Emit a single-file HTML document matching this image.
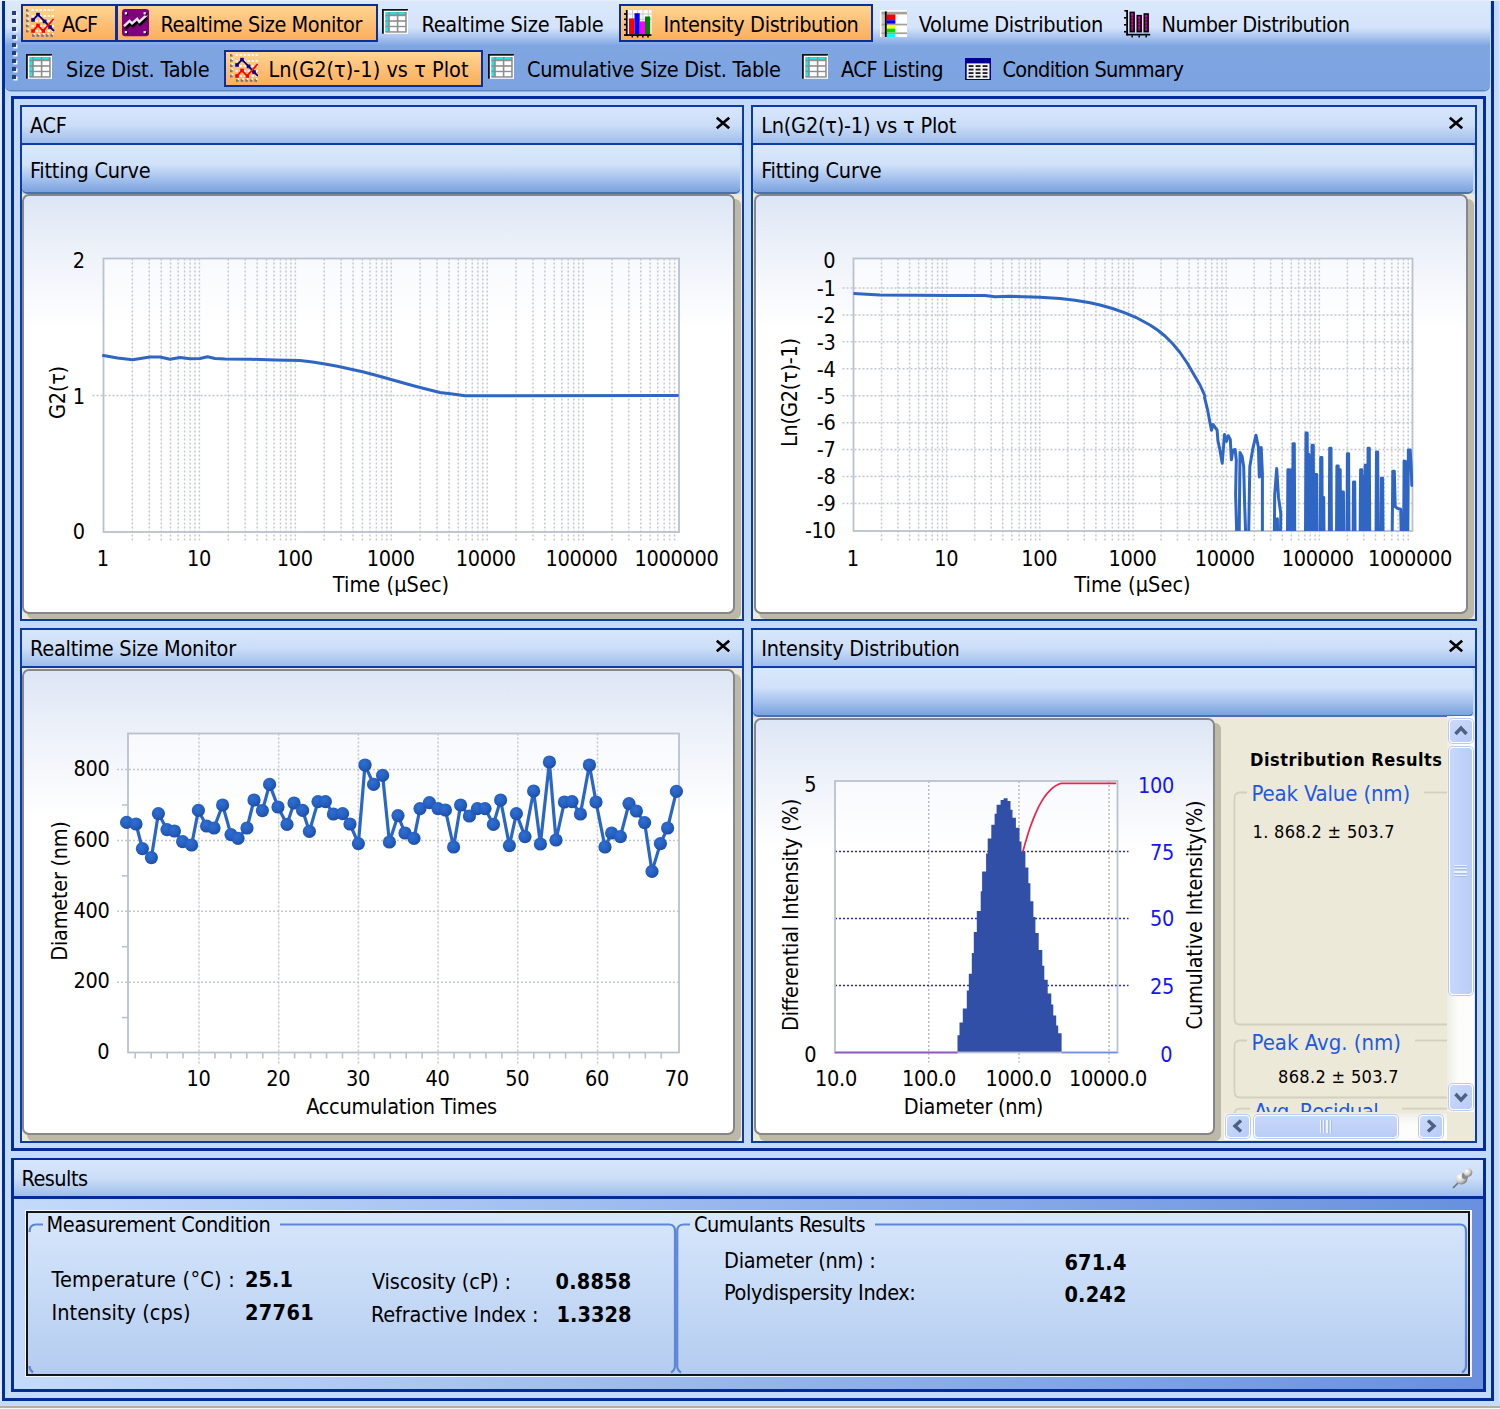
<!DOCTYPE html><html><head><meta charset="utf-8"><title>DLS</title><style>
html,body{margin:0;padding:0}body{width:1500px;height:1409px;position:relative;overflow:hidden;background:#c4dafa;font-family:'DejaVu Sans Condensed','Liberation Sans',sans-serif;font-size:21px;color:#000}
.t{position:absolute;white-space:nowrap}div{position:absolute}
</style></head><body>
<div style="position:absolute;left:2px;top:-4px;width:1492px;height:1405px;box-sizing:border-box;border:3px solid #002d96;background:#c4dafa;"></div>
<div style="position:absolute;left:1494px;top:0px;width:6px;height:1409px;background:linear-gradient(90deg,#c4dafa 0,#c4dafa 60%,#dde9fb 100%);"></div>
<div style="position:absolute;left:0px;top:0px;width:2px;height:1409px;background:#dfeafb;"></div>
<div style="position:absolute;left:0px;top:1401px;width:1500px;height:5px;background:#c6dbfa;"></div>
<div style="position:absolute;left:0px;top:1405.5px;width:1500px;height:2.0px;background:#b4b0a4;"></div>
<div style="position:absolute;left:0px;top:1407.5px;width:1500px;height:1.5px;background:#f6f6f4;"></div>
<div style="position:absolute;left:0px;top:0px;width:1500px;height:1px;background:#e6eefc;"></div>
<div style="position:absolute;left:5px;top:1px;width:1484.5px;height:88.5px;background:linear-gradient(180deg,#dce9fc 0,#d3e3fa 30%,#a8c3ee 41%,#7fa6e1 50%,#7ca3df 100%);border-radius:0 0 6px 6px;box-shadow:0 1.5px 0 #5d83c0;"></div>
<div style="position:absolute;left:10.5px;top:96px;width:1475.5px;height:1055px;box-sizing:border-box;border:3px solid #002d96;background:#c4dafa;"></div>
<div style="position:absolute;left:10.5px;top:1158px;width:1475.5px;height:234px;box-sizing:border-box;border:3px solid #002d96;border-top-width:2px;background:linear-gradient(90deg,#c4dafa 0,#6890de 100%);"></div>
<div style="position:absolute;left:12px;top:11px;width:4px;height:4px;background:#27407c;box-shadow:1.5px 1.5px 0 #f0f5fd;"></div><div style="position:absolute;left:12px;top:19px;width:4px;height:4px;background:#27407c;box-shadow:1.5px 1.5px 0 #f0f5fd;"></div><div style="position:absolute;left:12px;top:27px;width:4px;height:4px;background:#27407c;box-shadow:1.5px 1.5px 0 #f0f5fd;"></div><div style="position:absolute;left:12px;top:35px;width:4px;height:4px;background:#27407c;box-shadow:1.5px 1.5px 0 #f0f5fd;"></div><div style="position:absolute;left:12px;top:43px;width:4px;height:4px;background:#27407c;box-shadow:1.5px 1.5px 0 #f0f5fd;"></div><div style="position:absolute;left:12px;top:51px;width:4px;height:4px;background:#27407c;box-shadow:1.5px 1.5px 0 #f0f5fd;"></div><div style="position:absolute;left:12px;top:59px;width:4px;height:4px;background:#27407c;box-shadow:1.5px 1.5px 0 #f0f5fd;"></div><div style="position:absolute;left:12px;top:67px;width:4px;height:4px;background:#27407c;box-shadow:1.5px 1.5px 0 #f0f5fd;"></div><div style="position:absolute;left:12px;top:75px;width:4px;height:4px;background:#27407c;box-shadow:1.5px 1.5px 0 #f0f5fd;"></div>
<div style="position:absolute;left:21.3px;top:4.4px;width:96.0px;height:37.2px;box-sizing:border-box;border:2px solid #0b2f99;background:linear-gradient(180deg,#ffd590 0,#fdc27a 45%,#fbaf5c 100%);"></div>
<div style="position:absolute;left:115.8px;top:4.4px;width:262.0px;height:37.2px;box-sizing:border-box;border:2px solid #0b2f99;background:linear-gradient(180deg,#ffd590 0,#fdc27a 45%,#fbaf5c 100%);"></div>
<div style="position:absolute;left:618.6px;top:4.4px;width:254.79999999999995px;height:37.2px;box-sizing:border-box;border:2px solid #0b2f99;background:linear-gradient(180deg,#ffd590 0,#fdc27a 45%,#fbaf5c 100%);"></div>
<div style="position:absolute;left:224.4px;top:49.6px;width:258.79999999999995px;height:36.99999999999999px;box-sizing:border-box;border:2px solid #0b2f99;background:linear-gradient(180deg,#ffd590 0,#fdc27a 45%,#fbaf5c 100%);"></div>
<svg style="position:absolute;left:26px;top:8.5px" width="28.5" height="28.5" viewBox="0 0 14.25 14.25"><rect x="2.8" y="0" width="1.2" height="1" fill="#fff8ee"/><rect x="4.8" y="0" width="1.2" height="1" fill="#fff8ee"/><rect x="6.8" y="0" width="1.2" height="1" fill="#fff8ee"/><rect x="8.8" y="0" width="1.2" height="1" fill="#fff8ee"/><rect x="10.8" y="0" width="1.2" height="1" fill="#fff8ee"/><rect x="12.8" y="0" width="1.2" height="1" fill="#fff8ee"/><rect x="2.8" y="3" width="1.2" height="1" fill="#fff8ee"/><rect x="4.8" y="3" width="1.2" height="1" fill="#fff8ee"/><rect x="6.8" y="3" width="1.2" height="1" fill="#fff8ee"/><rect x="8.8" y="3" width="1.2" height="1" fill="#fff8ee"/><rect x="10.8" y="3" width="1.2" height="1" fill="#fff8ee"/><rect x="12.8" y="3" width="1.2" height="1" fill="#fff8ee"/><rect x="2.8" y="5.5" width="1.2" height="1" fill="#fff8ee"/><rect x="4.8" y="5.5" width="1.2" height="1" fill="#fff8ee"/><rect x="6.8" y="5.5" width="1.2" height="1" fill="#fff8ee"/><rect x="8.8" y="5.5" width="1.2" height="1" fill="#fff8ee"/><rect x="10.8" y="5.5" width="1.2" height="1" fill="#fff8ee"/><rect x="12.8" y="5.5" width="1.2" height="1" fill="#fff8ee"/><rect x="2.8" y="8" width="1.2" height="1" fill="#fff8ee"/><rect x="4.8" y="8" width="1.2" height="1" fill="#fff8ee"/><rect x="6.8" y="8" width="1.2" height="1" fill="#fff8ee"/><rect x="8.8" y="8" width="1.2" height="1" fill="#fff8ee"/><rect x="10.8" y="8" width="1.2" height="1" fill="#fff8ee"/><rect x="12.8" y="8" width="1.2" height="1" fill="#fff8ee"/><rect x="2.8" y="10.5" width="1.2" height="1" fill="#fff8ee"/><rect x="4.8" y="10.5" width="1.2" height="1" fill="#fff8ee"/><rect x="6.8" y="10.5" width="1.2" height="1" fill="#fff8ee"/><rect x="8.8" y="10.5" width="1.2" height="1" fill="#fff8ee"/><rect x="10.8" y="10.5" width="1.2" height="1" fill="#fff8ee"/><rect x="12.8" y="10.5" width="1.2" height="1" fill="#fff8ee"/><rect x="0" y="0" width="1.3" height="1.3" fill="#70767e"/><rect x="0.8" y="-0.5" width="0.8" height="0.8" fill="#fff"/><rect x="0" y="2.6" width="1.3" height="1.3" fill="#70767e"/><rect x="0.8" y="2.1" width="0.8" height="0.8" fill="#fff"/><rect x="0" y="5.2" width="1.3" height="1.3" fill="#70767e"/><rect x="0.8" y="4.7" width="0.8" height="0.8" fill="#fff"/><rect x="0" y="7.8" width="1.3" height="1.3" fill="#70767e"/><rect x="0.8" y="7.3" width="0.8" height="0.8" fill="#fff"/><rect x="0" y="10.4" width="1.3" height="1.3" fill="#70767e"/><rect x="0.8" y="9.9" width="0.8" height="0.8" fill="#fff"/><rect x="3" y="12.6" width="1.3" height="1.3" fill="#70767e"/><rect x="3.8" y="12.1" width="0.8" height="0.8" fill="#fff"/><rect x="5.3" y="12.6" width="1.3" height="1.3" fill="#70767e"/><rect x="6.1" y="12.1" width="0.8" height="0.8" fill="#fff"/><rect x="7.6" y="12.6" width="1.3" height="1.3" fill="#70767e"/><rect x="8.4" y="12.1" width="0.8" height="0.8" fill="#fff"/><rect x="9.9" y="12.6" width="1.3" height="1.3" fill="#70767e"/><rect x="10.700000000000001" y="12.1" width="0.8" height="0.8" fill="#fff"/><rect x="12.2" y="12.6" width="1.3" height="1.3" fill="#70767e"/><rect x="13.0" y="12.1" width="0.8" height="0.8" fill="#fff"/><path d="M3.5 5.5 L6 2.8 L9.3 6.2 L12 9 L14 11" stroke="#000090" stroke-width="0.9" fill="none"/><rect x="2.6" y="4.6" width="1.8" height="1.8" fill="#000090"/><rect x="5.1" y="1.9" width="1.8" height="1.8" fill="#000090"/><rect x="8.4" y="5.3" width="1.8" height="1.8" fill="#000090"/><rect x="11.1" y="8.1" width="1.8" height="1.8" fill="#000090"/><path d="M3.5 11 L6 8.2 L8.5 11 L13.8 5" stroke="#ff0000" stroke-width="0.9" fill="none"/><rect x="2.6" y="10.1" width="1.8" height="1.8" fill="#ff0000"/><rect x="5.1" y="7.299999999999999" width="1.8" height="1.8" fill="#ff0000"/><rect x="7.799999999999999" y="10.1" width="1.8" height="1.8" fill="#ff0000"/></svg>
<div class="t" style="left:62.00px;top:11.66px;font-size:21.5px;line-height:25.8px;letter-spacing:-0.663px;">ACF</div>
<svg style="position:absolute;left:122.2px;top:9.4px" width="27.2" height="27.2" viewBox="0 0 13.6 13.6"><rect x="0" y="0" width="13.6" height="13.6" rx="1.6" fill="#800080"/><path d="M1.6 10 L4.2 7.4 L5.4 8.6 L8 6.2 L9 7.8 L12.6 4.4" stroke="#000" stroke-width="1.3" fill="none"/><path d="M1 8.6 L3.8 6 L5 7.2 L7.6 4.9 L8.6 6.4 L12.4 2.9" stroke="#e8e8e8" stroke-width="1.2" fill="none"/><rect x="1.9" y="2.1" width="1.2" height="1.2" fill="#000"/><rect x="1.4" y="1.6" width="1.1" height="1.1" fill="#fff"/><rect x="11.3" y="2.1" width="1.2" height="1.2" fill="#000"/><rect x="10.8" y="1.6" width="1.1" height="1.1" fill="#fff"/><rect x="1.9" y="11.5" width="1.2" height="1.2" fill="#000"/><rect x="1.4" y="11.0" width="1.1" height="1.1" fill="#fff"/><rect x="11.3" y="11.5" width="1.2" height="1.2" fill="#000"/><rect x="10.8" y="11.0" width="1.1" height="1.1" fill="#fff"/></svg>
<div class="t" style="left:160.50px;top:11.66px;font-size:21.5px;line-height:25.8px;letter-spacing:-0.444px;">Realtime Size Monitor</div>
<svg style="position:absolute;left:382.3px;top:9px" width="26.2" height="24.8" viewBox="0 0 26.2 24.8"><rect x="0" y="0" width="26.2" height="24.8" fill="#fff"/><rect x="0" y="0" width="26.2" height="1.7" fill="#111"/><rect x="0" y="0" width="1.8" height="24.8" fill="#111"/><rect x="3.5" y="3" width="21.2" height="20.2" fill="#8e8e8e"/><rect x="3.8" y="3.2" width="2.4" height="20" fill="#15eaea"/><rect x="3.8" y="3.2" width="19" height="2.4" fill="#15eaea"/><rect x="3.5" y="5.6" width="21.2" height="1.6" fill="#8e8e8e"/><rect x="3.5" y="11.2" width="21.2" height="1.6" fill="#8e8e8e"/><rect x="3.5" y="16.6" width="21.2" height="1.6" fill="#8e8e8e"/><rect x="3.5" y="22" width="21.2" height="1.6" fill="#8e8e8e"/><rect x="6.2" y="3" width="1.6" height="20.2" fill="#8e8e8e"/><rect x="14.8" y="3" width="1.6" height="20.2" fill="#8e8e8e"/><rect x="23.2" y="3" width="1.6" height="20.2" fill="#8e8e8e"/><rect x="7.8" y="7.2" width="7" height="4" fill="#fff"/><rect x="16.4" y="7.2" width="6.8" height="4" fill="#fff"/><rect x="7.8" y="12.8" width="7" height="4" fill="#fff"/><rect x="16.4" y="12.8" width="6.8" height="4" fill="#fff"/><rect x="7.8" y="18.2" width="7" height="4" fill="#fff"/><rect x="16.4" y="18.2" width="6.8" height="4" fill="#fff"/><rect x="24.8" y="1.7" width="1.4" height="23.1" fill="#fff"/></svg>
<div class="t" style="left:421.50px;top:11.66px;font-size:21.5px;line-height:25.8px;letter-spacing:-0.261px;">Realtime Size Table</div>
<svg style="position:absolute;left:624px;top:9.5px" width="28" height="28" viewBox="0 0 28 28"><rect x="3.5" y="0" width="24" height="24.5" fill="#fff"/><rect x="8" y="0" width="1" height="24.5" fill="#c8c8c8"/><rect x="13.2" y="0" width="1" height="24.5" fill="#c8c8c8"/><rect x="18.5" y="0" width="1" height="24.5" fill="#c8c8c8"/><rect x="23.8" y="0" width="1" height="24.5" fill="#c8c8c8"/><rect x="3.5" y="3.5" width="24" height="1" fill="#c8c8c8"/><rect x="3.5" y="8.8" width="24" height="1" fill="#c8c8c8"/><rect x="5" y="8.4" width="5.5" height="16" fill="#ff0000"/><rect x="10.5" y="3.2" width="5.2" height="21.2" fill="#0000ff"/><rect x="15.7" y="11.4" width="5.3" height="13" fill="#ff00ff"/><rect x="21" y="6.5" width="5.2" height="18" fill="#008000"/><rect x="1.9" y="0" width="1.7" height="25.5" fill="#000"/><rect x="0" y="24.2" width="27.4" height="1.7" fill="#000"/><rect x="0" y="3.2" width="2" height="1.6" fill="#000"/><rect x="0" y="8.5" width="2" height="1.6" fill="#000"/><rect x="0" y="13.8" width="2" height="1.6" fill="#000"/><rect x="0" y="19" width="2" height="1.6" fill="#000"/><rect x="7.5" y="25.5" width="1.6" height="2" fill="#000"/><rect x="12.8" y="25.5" width="1.6" height="2" fill="#000"/><rect x="18" y="25.5" width="1.6" height="2" fill="#000"/><rect x="23.2" y="25.5" width="1.6" height="2" fill="#000"/></svg>
<div class="t" style="left:663.50px;top:11.66px;font-size:21.5px;line-height:25.8px;letter-spacing:-0.371px;">Intensity Distribution</div>
<svg style="position:absolute;left:879.6px;top:9.5px" width="27.6" height="27.6" viewBox="0 0 27.6 27.6"><rect x="0" y="0" width="27.6" height="27.6" fill="#fff"/><rect x="1.6" y="1.6" width="3.4" height="26" fill="#c4c4c4"/><rect x="1.6" y="1.8" width="26" height="2.6" fill="#a4a09a"/><rect x="1.6" y="13.7" width="26" height="1.7" fill="#a4a09a"/><rect x="1.6" y="22.4" width="26" height="1.7" fill="#a4a09a"/><rect x="6.6" y="4.4" width="8.8" height="5.8" fill="#ff0000"/><rect x="6.6" y="10.2" width="8.8" height="3.5" fill="#0000ff"/><rect x="6.6" y="15.4" width="8.8" height="3.2" fill="#ffff00"/><rect x="6.6" y="18.6" width="8.8" height="3.8" fill="#00e000"/><rect x="6.6" y="24.1" width="8.8" height="3.5" fill="#00ffff"/><rect x="4.9" y="1.4" width="1.8" height="26.2" fill="#000"/></svg>
<div class="t" style="left:918.80px;top:11.66px;font-size:21.5px;line-height:25.8px;letter-spacing:-0.356px;">Volume Distribution</div>
<svg style="position:absolute;left:1124px;top:9.5px" width="27" height="28" viewBox="0 0 27 28"><rect x="2.2" y="0" width="1.8" height="25.4" fill="#000"/><rect x="0.4" y="0" width="3.4" height="1.6" fill="#000"/><rect x="2.2" y="23.8" width="24" height="1.7" fill="#000"/><rect x="0" y="7" width="2.4" height="1.6" fill="#000"/><rect x="0" y="14" width="2.4" height="1.6" fill="#000"/><rect x="0" y="21" width="2.4" height="1.6" fill="#000"/><rect x="7.4" y="25.4" width="1.6" height="2" fill="#000"/><rect x="14.4" y="25.4" width="1.6" height="2" fill="#000"/><rect x="21.4" y="25.4" width="1.6" height="2" fill="#000"/><rect x="5.5" y="1.6" width="5.4" height="20.799999999999997" fill="#000"/><rect x="7.2" y="3.2" width="2" height="17.599999999999998" fill="#a8005c"/><rect x="7.2" y="3.2" width="2" height="2.2" fill="#d800d8"/><rect x="7.2" y="7.0" width="2" height="1.3" fill="#c000b0"/><rect x="7.2" y="10.4" width="2" height="1.3" fill="#c000b0"/><rect x="7.2" y="13.8" width="2" height="1.3" fill="#c000b0"/><rect x="7.2" y="17.2" width="2" height="1.3" fill="#c000b0"/><rect x="12.5" y="4.9" width="5.4" height="17.5" fill="#000"/><rect x="14.2" y="6.5" width="2" height="14.3" fill="#a8005c"/><rect x="14.2" y="6.5" width="2" height="2.2" fill="#d800d8"/><rect x="14.2" y="10.3" width="2" height="1.3" fill="#c000b0"/><rect x="14.2" y="13.700000000000001" width="2" height="1.3" fill="#c000b0"/><rect x="14.2" y="17.1" width="2" height="1.3" fill="#c000b0"/><rect x="19.5" y="3.2" width="5.4" height="19.2" fill="#000"/><rect x="21.2" y="4.800000000000001" width="2" height="16.0" fill="#a8005c"/><rect x="21.2" y="4.800000000000001" width="2" height="2.2" fill="#d800d8"/><rect x="21.2" y="8.600000000000001" width="2" height="1.3" fill="#c000b0"/><rect x="21.2" y="12.000000000000002" width="2" height="1.3" fill="#c000b0"/><rect x="21.2" y="15.400000000000002" width="2" height="1.3" fill="#c000b0"/><rect x="21.2" y="18.8" width="2" height="1.3" fill="#c000b0"/></svg>
<div class="t" style="left:1161.50px;top:11.66px;font-size:21.5px;line-height:25.8px;letter-spacing:-0.457px;">Number Distribution</div>
<svg style="position:absolute;left:26px;top:54px" width="26.2" height="24.8" viewBox="0 0 26.2 24.8"><rect x="0" y="0" width="26.2" height="24.8" fill="#fff"/><rect x="0" y="0" width="26.2" height="1.7" fill="#111"/><rect x="0" y="0" width="1.8" height="24.8" fill="#111"/><rect x="3.5" y="3" width="21.2" height="20.2" fill="#8e8e8e"/><rect x="3.8" y="3.2" width="2.4" height="20" fill="#15eaea"/><rect x="3.8" y="3.2" width="19" height="2.4" fill="#15eaea"/><rect x="3.5" y="5.6" width="21.2" height="1.6" fill="#8e8e8e"/><rect x="3.5" y="11.2" width="21.2" height="1.6" fill="#8e8e8e"/><rect x="3.5" y="16.6" width="21.2" height="1.6" fill="#8e8e8e"/><rect x="3.5" y="22" width="21.2" height="1.6" fill="#8e8e8e"/><rect x="6.2" y="3" width="1.6" height="20.2" fill="#8e8e8e"/><rect x="14.8" y="3" width="1.6" height="20.2" fill="#8e8e8e"/><rect x="23.2" y="3" width="1.6" height="20.2" fill="#8e8e8e"/><rect x="7.8" y="7.2" width="7" height="4" fill="#fff"/><rect x="16.4" y="7.2" width="6.8" height="4" fill="#fff"/><rect x="7.8" y="12.8" width="7" height="4" fill="#fff"/><rect x="16.4" y="12.8" width="6.8" height="4" fill="#fff"/><rect x="7.8" y="18.2" width="7" height="4" fill="#fff"/><rect x="16.4" y="18.2" width="6.8" height="4" fill="#fff"/><rect x="24.8" y="1.7" width="1.4" height="23.1" fill="#fff"/></svg>
<div class="t" style="left:66.00px;top:57.16px;font-size:21.5px;line-height:25.8px;letter-spacing:-0.139px;">Size Dist. Table</div>
<svg style="position:absolute;left:229.6px;top:53.5px" width="28.5" height="28.5" viewBox="0 0 14.25 14.25"><rect x="2.8" y="0" width="1.2" height="1" fill="#fff8ee"/><rect x="4.8" y="0" width="1.2" height="1" fill="#fff8ee"/><rect x="6.8" y="0" width="1.2" height="1" fill="#fff8ee"/><rect x="8.8" y="0" width="1.2" height="1" fill="#fff8ee"/><rect x="10.8" y="0" width="1.2" height="1" fill="#fff8ee"/><rect x="12.8" y="0" width="1.2" height="1" fill="#fff8ee"/><rect x="2.8" y="3" width="1.2" height="1" fill="#fff8ee"/><rect x="4.8" y="3" width="1.2" height="1" fill="#fff8ee"/><rect x="6.8" y="3" width="1.2" height="1" fill="#fff8ee"/><rect x="8.8" y="3" width="1.2" height="1" fill="#fff8ee"/><rect x="10.8" y="3" width="1.2" height="1" fill="#fff8ee"/><rect x="12.8" y="3" width="1.2" height="1" fill="#fff8ee"/><rect x="2.8" y="5.5" width="1.2" height="1" fill="#fff8ee"/><rect x="4.8" y="5.5" width="1.2" height="1" fill="#fff8ee"/><rect x="6.8" y="5.5" width="1.2" height="1" fill="#fff8ee"/><rect x="8.8" y="5.5" width="1.2" height="1" fill="#fff8ee"/><rect x="10.8" y="5.5" width="1.2" height="1" fill="#fff8ee"/><rect x="12.8" y="5.5" width="1.2" height="1" fill="#fff8ee"/><rect x="2.8" y="8" width="1.2" height="1" fill="#fff8ee"/><rect x="4.8" y="8" width="1.2" height="1" fill="#fff8ee"/><rect x="6.8" y="8" width="1.2" height="1" fill="#fff8ee"/><rect x="8.8" y="8" width="1.2" height="1" fill="#fff8ee"/><rect x="10.8" y="8" width="1.2" height="1" fill="#fff8ee"/><rect x="12.8" y="8" width="1.2" height="1" fill="#fff8ee"/><rect x="2.8" y="10.5" width="1.2" height="1" fill="#fff8ee"/><rect x="4.8" y="10.5" width="1.2" height="1" fill="#fff8ee"/><rect x="6.8" y="10.5" width="1.2" height="1" fill="#fff8ee"/><rect x="8.8" y="10.5" width="1.2" height="1" fill="#fff8ee"/><rect x="10.8" y="10.5" width="1.2" height="1" fill="#fff8ee"/><rect x="12.8" y="10.5" width="1.2" height="1" fill="#fff8ee"/><rect x="0" y="0" width="1.3" height="1.3" fill="#70767e"/><rect x="0.8" y="-0.5" width="0.8" height="0.8" fill="#fff"/><rect x="0" y="2.6" width="1.3" height="1.3" fill="#70767e"/><rect x="0.8" y="2.1" width="0.8" height="0.8" fill="#fff"/><rect x="0" y="5.2" width="1.3" height="1.3" fill="#70767e"/><rect x="0.8" y="4.7" width="0.8" height="0.8" fill="#fff"/><rect x="0" y="7.8" width="1.3" height="1.3" fill="#70767e"/><rect x="0.8" y="7.3" width="0.8" height="0.8" fill="#fff"/><rect x="0" y="10.4" width="1.3" height="1.3" fill="#70767e"/><rect x="0.8" y="9.9" width="0.8" height="0.8" fill="#fff"/><rect x="3" y="12.6" width="1.3" height="1.3" fill="#70767e"/><rect x="3.8" y="12.1" width="0.8" height="0.8" fill="#fff"/><rect x="5.3" y="12.6" width="1.3" height="1.3" fill="#70767e"/><rect x="6.1" y="12.1" width="0.8" height="0.8" fill="#fff"/><rect x="7.6" y="12.6" width="1.3" height="1.3" fill="#70767e"/><rect x="8.4" y="12.1" width="0.8" height="0.8" fill="#fff"/><rect x="9.9" y="12.6" width="1.3" height="1.3" fill="#70767e"/><rect x="10.700000000000001" y="12.1" width="0.8" height="0.8" fill="#fff"/><rect x="12.2" y="12.6" width="1.3" height="1.3" fill="#70767e"/><rect x="13.0" y="12.1" width="0.8" height="0.8" fill="#fff"/><path d="M3.5 5.5 L6 2.8 L9.3 6.2 L12 9 L14 11" stroke="#000090" stroke-width="0.9" fill="none"/><rect x="2.6" y="4.6" width="1.8" height="1.8" fill="#000090"/><rect x="5.1" y="1.9" width="1.8" height="1.8" fill="#000090"/><rect x="8.4" y="5.3" width="1.8" height="1.8" fill="#000090"/><rect x="11.1" y="8.1" width="1.8" height="1.8" fill="#000090"/><path d="M3.5 11 L6 8.2 L8.5 11 L13.8 5" stroke="#ff0000" stroke-width="0.9" fill="none"/><rect x="2.6" y="10.1" width="1.8" height="1.8" fill="#ff0000"/><rect x="5.1" y="7.299999999999999" width="1.8" height="1.8" fill="#ff0000"/><rect x="7.799999999999999" y="10.1" width="1.8" height="1.8" fill="#ff0000"/></svg>
<div class="t" style="left:268.50px;top:57.16px;font-size:21.5px;line-height:25.8px;letter-spacing:0.025px;">Ln(G2(τ)-1) vs τ Plot</div>
<svg style="position:absolute;left:488px;top:54px" width="26.2" height="24.8" viewBox="0 0 26.2 24.8"><rect x="0" y="0" width="26.2" height="24.8" fill="#fff"/><rect x="0" y="0" width="26.2" height="1.7" fill="#111"/><rect x="0" y="0" width="1.8" height="24.8" fill="#111"/><rect x="3.5" y="3" width="21.2" height="20.2" fill="#8e8e8e"/><rect x="3.8" y="3.2" width="2.4" height="20" fill="#15eaea"/><rect x="3.8" y="3.2" width="19" height="2.4" fill="#15eaea"/><rect x="3.5" y="5.6" width="21.2" height="1.6" fill="#8e8e8e"/><rect x="3.5" y="11.2" width="21.2" height="1.6" fill="#8e8e8e"/><rect x="3.5" y="16.6" width="21.2" height="1.6" fill="#8e8e8e"/><rect x="3.5" y="22" width="21.2" height="1.6" fill="#8e8e8e"/><rect x="6.2" y="3" width="1.6" height="20.2" fill="#8e8e8e"/><rect x="14.8" y="3" width="1.6" height="20.2" fill="#8e8e8e"/><rect x="23.2" y="3" width="1.6" height="20.2" fill="#8e8e8e"/><rect x="7.8" y="7.2" width="7" height="4" fill="#fff"/><rect x="16.4" y="7.2" width="6.8" height="4" fill="#fff"/><rect x="7.8" y="12.8" width="7" height="4" fill="#fff"/><rect x="16.4" y="12.8" width="6.8" height="4" fill="#fff"/><rect x="7.8" y="18.2" width="7" height="4" fill="#fff"/><rect x="16.4" y="18.2" width="6.8" height="4" fill="#fff"/><rect x="24.8" y="1.7" width="1.4" height="23.1" fill="#fff"/></svg>
<div class="t" style="left:527.00px;top:57.16px;font-size:21.5px;line-height:25.8px;letter-spacing:-0.325px;">Cumulative Size Dist. Table</div>
<svg style="position:absolute;left:802px;top:54px" width="26.2" height="24.8" viewBox="0 0 26.2 24.8"><rect x="0" y="0" width="26.2" height="24.8" fill="#fff"/><rect x="0" y="0" width="26.2" height="1.7" fill="#111"/><rect x="0" y="0" width="1.8" height="24.8" fill="#111"/><rect x="3.5" y="3" width="21.2" height="20.2" fill="#8e8e8e"/><rect x="3.8" y="3.2" width="2.4" height="20" fill="#15eaea"/><rect x="3.8" y="3.2" width="19" height="2.4" fill="#15eaea"/><rect x="3.5" y="5.6" width="21.2" height="1.6" fill="#8e8e8e"/><rect x="3.5" y="11.2" width="21.2" height="1.6" fill="#8e8e8e"/><rect x="3.5" y="16.6" width="21.2" height="1.6" fill="#8e8e8e"/><rect x="3.5" y="22" width="21.2" height="1.6" fill="#8e8e8e"/><rect x="6.2" y="3" width="1.6" height="20.2" fill="#8e8e8e"/><rect x="14.8" y="3" width="1.6" height="20.2" fill="#8e8e8e"/><rect x="23.2" y="3" width="1.6" height="20.2" fill="#8e8e8e"/><rect x="7.8" y="7.2" width="7" height="4" fill="#fff"/><rect x="16.4" y="7.2" width="6.8" height="4" fill="#fff"/><rect x="7.8" y="12.8" width="7" height="4" fill="#fff"/><rect x="16.4" y="12.8" width="6.8" height="4" fill="#fff"/><rect x="7.8" y="18.2" width="7" height="4" fill="#fff"/><rect x="16.4" y="18.2" width="6.8" height="4" fill="#fff"/><rect x="24.8" y="1.7" width="1.4" height="23.1" fill="#fff"/></svg>
<div class="t" style="left:841.00px;top:57.16px;font-size:21.5px;line-height:25.8px;letter-spacing:-0.487px;">ACF Listing</div>
<svg style="position:absolute;left:964.6px;top:57.7px" width="26.1" height="22.7" viewBox="0 0 26.1 22.7"><rect x="0" y="0" width="26.1" height="22.7" fill="#00008c"/><rect x="1.7" y="5.4" width="22.8" height="15.6" fill="#f4f4f4"/><rect x="3.6" y="7.2" width="4.9" height="1.8" fill="#1a1a1a"/><rect x="3.6" y="10.7" width="4.9" height="1.8" fill="#1a1a1a"/><rect x="3.6" y="14.2" width="4.9" height="1.8" fill="#1a1a1a"/><rect x="3.6" y="17.7" width="4.9" height="1.8" fill="#1a1a1a"/><rect x="10.6" y="7.2" width="4.9" height="1.8" fill="#1a1a1a"/><rect x="10.6" y="10.7" width="4.9" height="1.8" fill="#1a1a1a"/><rect x="10.6" y="14.2" width="4.9" height="1.8" fill="#1a1a1a"/><rect x="10.6" y="17.7" width="4.9" height="1.8" fill="#1a1a1a"/><rect x="17.6" y="7.2" width="4.9" height="1.8" fill="#1a1a1a"/><rect x="17.6" y="10.7" width="4.9" height="1.8" fill="#1a1a1a"/><rect x="17.6" y="14.2" width="4.9" height="1.8" fill="#1a1a1a"/><rect x="17.6" y="17.7" width="4.9" height="1.8" fill="#1a1a1a"/></svg>
<div class="t" style="left:1002.40px;top:57.16px;font-size:21.5px;line-height:25.8px;letter-spacing:-0.643px;">Condition Summary</div>
<div style="position:absolute;left:19.5px;top:105px;width:724.5px;height:516px;box-sizing:border-box;border:2px solid #0b3ba3;background:#ece9d8;"></div>
<div style="position:absolute;left:21.5px;top:107px;width:720.5px;height:36px;background:linear-gradient(180deg,#d6e6fb 0,#ccdef8 50%,#9fbdea 100%);"></div>
<div style="position:absolute;left:21.5px;top:142.7px;width:720.5px;height:2.3000000000000114px;background:#0b3ba3;"></div>
<div class="t" style="left:30.00px;top:112.66px;font-size:21.5px;line-height:25.8px;letter-spacing:-0.291px;">ACF</div>
<svg style="position:absolute;left:714px;top:115px" width="18" height="16" viewBox="-9 -8 18 16"><path d="M-6.2 -5.2 L6.2 5.2 M6.2 -5.2 L-6.2 5.2" stroke="#000" stroke-width="2.7" fill="none"/></svg>
<div style="position:absolute;left:21.5px;top:145px;width:720.5px;height:49px;background:#c4dafa;"></div>
<div style="position:absolute;left:21.5px;top:145px;width:718.5px;height:47px;background:linear-gradient(180deg,#d9e8fc 0,#d0e1f9 42%,#a5c1ed 72%,#7ba2df 100%);border-radius:4px 4px 5px 5px;box-shadow:0 2px 0 #4b70ad;"></div>
<div class="t" style="left:30.00px;top:157.66px;font-size:21.5px;line-height:25.8px;letter-spacing:-0.221px;">Fitting Curve</div>
<div style="position:absolute;left:750.7px;top:105px;width:726.7px;height:516px;box-sizing:border-box;border:2px solid #0b3ba3;background:#ece9d8;"></div>
<div style="position:absolute;left:752.7px;top:107px;width:722.7px;height:36px;background:linear-gradient(180deg,#d6e6fb 0,#ccdef8 50%,#9fbdea 100%);"></div>
<div style="position:absolute;left:752.7px;top:142.7px;width:722.7px;height:2.3000000000000114px;background:#0b3ba3;"></div>
<div class="t" style="left:761.20px;top:112.66px;font-size:21.5px;line-height:25.8px;letter-spacing:-0.221px;">Ln(G2(τ)-1) vs τ Plot</div>
<svg style="position:absolute;left:1447.4px;top:115px" width="18" height="16" viewBox="-9 -8 18 16"><path d="M-6.2 -5.2 L6.2 5.2 M6.2 -5.2 L-6.2 5.2" stroke="#000" stroke-width="2.7" fill="none"/></svg>
<div style="position:absolute;left:752.7px;top:145px;width:722.7px;height:49px;background:#c4dafa;"></div>
<div style="position:absolute;left:752.7px;top:145px;width:720.7px;height:47px;background:linear-gradient(180deg,#d9e8fc 0,#d0e1f9 42%,#a5c1ed 72%,#7ba2df 100%);border-radius:4px 4px 5px 5px;box-shadow:0 2px 0 #4b70ad;"></div>
<div class="t" style="left:761.20px;top:157.66px;font-size:21.5px;line-height:25.8px;letter-spacing:-0.221px;">Fitting Curve</div>
<div style="position:absolute;left:19.5px;top:628px;width:724.5px;height:514.5px;box-sizing:border-box;border:2px solid #0b3ba3;background:#ece9d8;"></div>
<div style="position:absolute;left:21.5px;top:630px;width:720.5px;height:36px;background:linear-gradient(180deg,#d6e6fb 0,#ccdef8 50%,#9fbdea 100%);"></div>
<div style="position:absolute;left:21.5px;top:665.7px;width:720.5px;height:2.2999999999999545px;background:#0b3ba3;"></div>
<div class="t" style="left:30.00px;top:635.66px;font-size:21.5px;line-height:25.8px;letter-spacing:-0.233px;">Realtime Size Monitor</div>
<svg style="position:absolute;left:714px;top:638px" width="18" height="16" viewBox="-9 -8 18 16"><path d="M-6.2 -5.2 L6.2 5.2 M6.2 -5.2 L-6.2 5.2" stroke="#000" stroke-width="2.7" fill="none"/></svg>
<div style="position:absolute;left:750.7px;top:628px;width:726.7px;height:514.5px;box-sizing:border-box;border:2px solid #0b3ba3;background:#ece9d8;"></div>
<div style="position:absolute;left:752.7px;top:630px;width:722.7px;height:36px;background:linear-gradient(180deg,#d6e6fb 0,#ccdef8 50%,#9fbdea 100%);"></div>
<div style="position:absolute;left:752.7px;top:665.7px;width:722.7px;height:2.2999999999999545px;background:#0b3ba3;"></div>
<div class="t" style="left:761.20px;top:635.66px;font-size:21.5px;line-height:25.8px;letter-spacing:-0.215px;">Intensity Distribution</div>
<svg style="position:absolute;left:1447.4px;top:638px" width="18" height="16" viewBox="-9 -8 18 16"><path d="M-6.2 -5.2 L6.2 5.2 M6.2 -5.2 L-6.2 5.2" stroke="#000" stroke-width="2.7" fill="none"/></svg>
<div style="position:absolute;left:752.7px;top:668px;width:722.7px;height:49px;background:#c4dafa;"></div>
<div style="position:absolute;left:752.7px;top:668px;width:720.7px;height:47px;background:linear-gradient(180deg,#d9e8fc 0,#d0e1f9 42%,#a5c1ed 72%,#7ba2df 100%);border-radius:4px 4px 5px 5px;box-shadow:0 2px 0 #4b70ad;"></div>
<div style="position:absolute;left:27px;top:198.5px;width:714px;height:420.5px;background:#bdb9a9;border-radius:6px;"></div>
<div style="position:absolute;left:22px;top:193.5px;width:713px;height:420.0px;box-sizing:border-box;border:2px solid #85878a;border-radius:7px;background:linear-gradient(180deg,#dde6f5 0,#e8eef8 9%,#f5f7fc 21%,#ffffff 32%,#fff 100%);"></div>
<div style="position:absolute;left:758.5px;top:198.5px;width:715.0px;height:420.5px;background:#bdb9a9;border-radius:6px;"></div>
<div style="position:absolute;left:753.5px;top:193.5px;width:714.0px;height:420.0px;box-sizing:border-box;border:2px solid #85878a;border-radius:7px;background:linear-gradient(180deg,#dde6f5 0,#e8eef8 9%,#f5f7fc 21%,#ffffff 32%,#fff 100%);"></div>
<div style="position:absolute;left:27px;top:674px;width:714px;height:466.5px;background:#bdb9a9;border-radius:6px;"></div>
<div style="position:absolute;left:22px;top:669px;width:713px;height:466px;box-sizing:border-box;border:2px solid #85878a;border-radius:7px;background:linear-gradient(180deg,#dde6f5 0,#e8eef8 9%,#f5f7fc 21%,#ffffff 32%,#fff 100%);"></div>
<div style="position:absolute;left:758.5px;top:722.5px;width:462.5px;height:418.0px;background:#bdb9a9;border-radius:6px;"></div>
<div style="position:absolute;left:753.5px;top:717.5px;width:461.5px;height:417.5px;box-sizing:border-box;border:2px solid #85878a;border-radius:7px;background:linear-gradient(180deg,#dde6f5 0,#e8eef8 9%,#f5f7fc 21%,#ffffff 32%,#fff 100%);"></div>
<svg style="position:absolute;left:0;top:0" width="1500" height="1409" viewBox="0 0 1500 1409"><path d="M1247 792.5 L1240 792.5 Q1234.5 792.5 1234.5 798.5 L1234.5 1018.5 Q1234.5 1024.5 1240 1024.5 L1447 1024.5" stroke="#d2d0bf" stroke-width="1.8" fill="none"/><path d="M1424 792.5 L1447 792.5" stroke="#d2d0bf" stroke-width="1.8" fill="none"/><path d="M1247 1040.5 L1240 1040.5 Q1234.5 1040.5 1234.5 1046.5 L1234.5 1091.5 Q1234.5 1097.5 1240 1097.5 L1447 1097.5" stroke="#d2d0bf" stroke-width="1.8" fill="none"/><path d="M1415 1040.5 L1447 1040.5" stroke="#d2d0bf" stroke-width="1.8" fill="none"/><path d="M1250 1108.6 L1240 1108.6 Q1234.5 1108.6 1234.5 1114.6 L1234.5 1114" stroke="#d2d0bf" stroke-width="1.8" fill="none"/><path d="M1402 1108.6 L1447 1108.6" stroke="#d2d0bf" stroke-width="1.8" fill="none"/></svg>
<div class="t" style="left:1250.00px;top:749.47px;font-size:18px;line-height:21.6px;font-weight:bold;letter-spacing:0.516px;">Distribution Results</div>
<div class="t" style="left:1251.50px;top:781.29px;font-size:22px;line-height:26.4px;color:#1e5ae0;letter-spacing:-0.163px;">Peak Value (nm)</div>
<div class="t" style="left:1252.50px;top:821.47px;font-size:18px;line-height:21.6px;letter-spacing:0.335px;">1. 868.2 ± 503.7</div>
<div class="t" style="left:1251.50px;top:1029.69px;font-size:22px;line-height:26.4px;color:#1e5ae0;letter-spacing:-0.005px;">Peak Avg. (nm)</div>
<div class="t" style="left:1278.00px;top:1066.47px;font-size:18px;line-height:21.6px;letter-spacing:0.342px;">868.2 ± 503.7</div>
<div style="position:absolute;left:1236px;top:1100px;width:211px;height:12.400000000000091px;overflow:hidden;"><div class="t" style="left:18.00px;top:-0.81px;font-size:22px;line-height:26.4px;color:#1e5ae0;letter-spacing:-0.661px;">Avg. Residual</div></div>
<div style="position:absolute;left:1447px;top:716px;width:27px;height:397px;background:linear-gradient(90deg,#eeede5,#fcfcfa 40%,#fdfdfb);"></div>
<div style="position:absolute;left:1448.5px;top:718.5px;width:24.0px;height:24.5px;box-sizing:border-box;border:1.5px solid #fff;border-radius:4px;background:linear-gradient(135deg,#cbdafb,#b9ccf6);box-shadow:0 0 0 1px #b7caf5;"></div><svg style="position:absolute;left:1450.5px;top:720.75px" width="20" height="20" viewBox="-10 -10 20 20"><path d="M-5.5 3 L0 -3 L5.5 3" stroke="#4d6185" stroke-width="3.4" fill="none"/></svg>
<div style="position:absolute;left:1448.5px;top:747px;width:24.0px;height:248px;box-sizing:border-box;border:1.5px solid #fff;border-radius:4px;background:linear-gradient(90deg,#c8d7fb,#bacdf7);box-shadow:0 0 0 1px #b7caf5;"></div>
<div style="position:absolute;left:1454px;top:864.5px;width:13px;height:1.5px;background:#eef3fe;box-shadow:0 1px 0 #a9bdec;"></div>
<div style="position:absolute;left:1454px;top:867.9px;width:13px;height:1.5px;background:#eef3fe;box-shadow:0 1px 0 #a9bdec;"></div>
<div style="position:absolute;left:1454px;top:871.3px;width:13px;height:1.5px;background:#eef3fe;box-shadow:0 1px 0 #a9bdec;"></div>
<div style="position:absolute;left:1454px;top:874.7px;width:13px;height:1.5px;background:#eef3fe;box-shadow:0 1px 0 #a9bdec;"></div>
<div style="position:absolute;left:1448.5px;top:1084px;width:24.0px;height:25.5px;box-sizing:border-box;border:1.5px solid #fff;border-radius:4px;background:linear-gradient(135deg,#cbdafb,#b9ccf6);box-shadow:0 0 0 1px #b7caf5;"></div><svg style="position:absolute;left:1450.5px;top:1086.75px" width="20" height="20" viewBox="-10 -10 20 20"><path d="M-5.5 -3 L0 3 L5.5 -3" stroke="#4d6185" stroke-width="3.4" fill="none"/></svg>
<div style="position:absolute;left:1224px;top:1113px;width:223px;height:27px;background:linear-gradient(180deg,#eeede5,#fcfcfa 40%,#fdfdfb);"></div>
<div style="position:absolute;left:1447px;top:1112px;width:27px;height:28px;background:#ece9d8;"></div>
<div style="position:absolute;left:1225.5px;top:1114.5px;width:24.5px;height:23.5px;box-sizing:border-box;border:1.5px solid #fff;border-radius:4px;background:linear-gradient(135deg,#cbdafb,#b9ccf6);box-shadow:0 0 0 1px #b7caf5;"></div><svg style="position:absolute;left:1227.75px;top:1116.25px" width="20" height="20" viewBox="-10 -10 20 20"><path d="M3 -5.5 L-3 0 L3 5.5" stroke="#4d6185" stroke-width="3.4" fill="none"/></svg>
<div style="position:absolute;left:1254px;top:1114.5px;width:144px;height:23.5px;box-sizing:border-box;border:1.5px solid #fff;border-radius:4px;background:linear-gradient(180deg,#c8d7fb,#bacdf7);box-shadow:0 0 0 1px #b7caf5;"></div>
<div style="position:absolute;left:1319.5px;top:1120px;width:1.5px;height:12.5px;background:#eef3fe;box-shadow:1px 0 0 #a9bdec;"></div>
<div style="position:absolute;left:1322.9px;top:1120px;width:1.5px;height:12.5px;background:#eef3fe;box-shadow:1px 0 0 #a9bdec;"></div>
<div style="position:absolute;left:1326.3px;top:1120px;width:1.5px;height:12.5px;background:#eef3fe;box-shadow:1px 0 0 #a9bdec;"></div>
<div style="position:absolute;left:1329.7px;top:1120px;width:1.5px;height:12.5px;background:#eef3fe;box-shadow:1px 0 0 #a9bdec;"></div>
<div style="position:absolute;left:1418.5px;top:1114.5px;width:24.5px;height:23.5px;box-sizing:border-box;border:1.5px solid #fff;border-radius:4px;background:linear-gradient(135deg,#cbdafb,#b9ccf6);box-shadow:0 0 0 1px #b7caf5;"></div><svg style="position:absolute;left:1420.75px;top:1116.25px" width="20" height="20" viewBox="-10 -10 20 20"><path d="M-3 -5.5 L3 0 L-3 5.5" stroke="#4d6185" stroke-width="3.4" fill="none"/></svg>
<svg style="position:absolute;left:0;top:0" width="1500" height="1409" viewBox="0 0 1500 1409" font-family="'DejaVu Sans Condensed','Liberation Sans',sans-serif"><defs><radialGradient id="ball" cx="0.4" cy="0.35" r="0.65"><stop offset="0" stop-color="#2f6ed2"/><stop offset="0.6" stop-color="#2560c0"/><stop offset="1" stop-color="#1d4ea6"/></radialGradient></defs><rect x="103.5" y="258.5" width="575.5" height="273.5" fill="#fff" fill-opacity="0.55"/>
<line x1="132.37" y1="258.50" x2="132.37" y2="542.50" stroke="#c3c8cf" stroke-width="1.5" stroke-dasharray="2 2"/>
<line x1="149.26" y1="258.50" x2="149.26" y2="542.50" stroke="#c3c8cf" stroke-width="1.5" stroke-dasharray="2 2"/>
<line x1="161.25" y1="258.50" x2="161.25" y2="542.50" stroke="#c3c8cf" stroke-width="1.5" stroke-dasharray="2 2"/>
<line x1="170.54" y1="258.50" x2="170.54" y2="542.50" stroke="#c3c8cf" stroke-width="1.5" stroke-dasharray="2 2"/>
<line x1="178.14" y1="258.50" x2="178.14" y2="542.50" stroke="#c3c8cf" stroke-width="1.5" stroke-dasharray="2 2"/>
<line x1="184.56" y1="258.50" x2="184.56" y2="542.50" stroke="#c3c8cf" stroke-width="1.5" stroke-dasharray="2 2"/>
<line x1="190.12" y1="258.50" x2="190.12" y2="542.50" stroke="#c3c8cf" stroke-width="1.5" stroke-dasharray="2 2"/>
<line x1="195.03" y1="258.50" x2="195.03" y2="542.50" stroke="#c3c8cf" stroke-width="1.5" stroke-dasharray="2 2"/>
<line x1="199.42" y1="258.50" x2="199.42" y2="542.50" stroke="#c3c8cf" stroke-width="1.5" stroke-dasharray="2 2"/>
<line x1="228.29" y1="258.50" x2="228.29" y2="542.50" stroke="#c3c8cf" stroke-width="1.5" stroke-dasharray="2 2"/>
<line x1="245.18" y1="258.50" x2="245.18" y2="542.50" stroke="#c3c8cf" stroke-width="1.5" stroke-dasharray="2 2"/>
<line x1="257.16" y1="258.50" x2="257.16" y2="542.50" stroke="#c3c8cf" stroke-width="1.5" stroke-dasharray="2 2"/>
<line x1="266.46" y1="258.50" x2="266.46" y2="542.50" stroke="#c3c8cf" stroke-width="1.5" stroke-dasharray="2 2"/>
<line x1="274.05" y1="258.50" x2="274.05" y2="542.50" stroke="#c3c8cf" stroke-width="1.5" stroke-dasharray="2 2"/>
<line x1="280.48" y1="258.50" x2="280.48" y2="542.50" stroke="#c3c8cf" stroke-width="1.5" stroke-dasharray="2 2"/>
<line x1="286.04" y1="258.50" x2="286.04" y2="542.50" stroke="#c3c8cf" stroke-width="1.5" stroke-dasharray="2 2"/>
<line x1="290.94" y1="258.50" x2="290.94" y2="542.50" stroke="#c3c8cf" stroke-width="1.5" stroke-dasharray="2 2"/>
<line x1="295.33" y1="258.50" x2="295.33" y2="542.50" stroke="#c3c8cf" stroke-width="1.5" stroke-dasharray="2 2"/>
<line x1="324.21" y1="258.50" x2="324.21" y2="542.50" stroke="#c3c8cf" stroke-width="1.5" stroke-dasharray="2 2"/>
<line x1="341.10" y1="258.50" x2="341.10" y2="542.50" stroke="#c3c8cf" stroke-width="1.5" stroke-dasharray="2 2"/>
<line x1="353.08" y1="258.50" x2="353.08" y2="542.50" stroke="#c3c8cf" stroke-width="1.5" stroke-dasharray="2 2"/>
<line x1="362.38" y1="258.50" x2="362.38" y2="542.50" stroke="#c3c8cf" stroke-width="1.5" stroke-dasharray="2 2"/>
<line x1="369.97" y1="258.50" x2="369.97" y2="542.50" stroke="#c3c8cf" stroke-width="1.5" stroke-dasharray="2 2"/>
<line x1="376.39" y1="258.50" x2="376.39" y2="542.50" stroke="#c3c8cf" stroke-width="1.5" stroke-dasharray="2 2"/>
<line x1="381.95" y1="258.50" x2="381.95" y2="542.50" stroke="#c3c8cf" stroke-width="1.5" stroke-dasharray="2 2"/>
<line x1="386.86" y1="258.50" x2="386.86" y2="542.50" stroke="#c3c8cf" stroke-width="1.5" stroke-dasharray="2 2"/>
<line x1="391.25" y1="258.50" x2="391.25" y2="542.50" stroke="#c3c8cf" stroke-width="1.5" stroke-dasharray="2 2"/>
<line x1="420.12" y1="258.50" x2="420.12" y2="542.50" stroke="#c3c8cf" stroke-width="1.5" stroke-dasharray="2 2"/>
<line x1="437.01" y1="258.50" x2="437.01" y2="542.50" stroke="#c3c8cf" stroke-width="1.5" stroke-dasharray="2 2"/>
<line x1="449.00" y1="258.50" x2="449.00" y2="542.50" stroke="#c3c8cf" stroke-width="1.5" stroke-dasharray="2 2"/>
<line x1="458.29" y1="258.50" x2="458.29" y2="542.50" stroke="#c3c8cf" stroke-width="1.5" stroke-dasharray="2 2"/>
<line x1="465.89" y1="258.50" x2="465.89" y2="542.50" stroke="#c3c8cf" stroke-width="1.5" stroke-dasharray="2 2"/>
<line x1="472.31" y1="258.50" x2="472.31" y2="542.50" stroke="#c3c8cf" stroke-width="1.5" stroke-dasharray="2 2"/>
<line x1="477.87" y1="258.50" x2="477.87" y2="542.50" stroke="#c3c8cf" stroke-width="1.5" stroke-dasharray="2 2"/>
<line x1="482.78" y1="258.50" x2="482.78" y2="542.50" stroke="#c3c8cf" stroke-width="1.5" stroke-dasharray="2 2"/>
<line x1="487.17" y1="258.50" x2="487.17" y2="542.50" stroke="#c3c8cf" stroke-width="1.5" stroke-dasharray="2 2"/>
<line x1="516.04" y1="258.50" x2="516.04" y2="542.50" stroke="#c3c8cf" stroke-width="1.5" stroke-dasharray="2 2"/>
<line x1="532.93" y1="258.50" x2="532.93" y2="542.50" stroke="#c3c8cf" stroke-width="1.5" stroke-dasharray="2 2"/>
<line x1="544.91" y1="258.50" x2="544.91" y2="542.50" stroke="#c3c8cf" stroke-width="1.5" stroke-dasharray="2 2"/>
<line x1="554.21" y1="258.50" x2="554.21" y2="542.50" stroke="#c3c8cf" stroke-width="1.5" stroke-dasharray="2 2"/>
<line x1="561.80" y1="258.50" x2="561.80" y2="542.50" stroke="#c3c8cf" stroke-width="1.5" stroke-dasharray="2 2"/>
<line x1="568.23" y1="258.50" x2="568.23" y2="542.50" stroke="#c3c8cf" stroke-width="1.5" stroke-dasharray="2 2"/>
<line x1="573.79" y1="258.50" x2="573.79" y2="542.50" stroke="#c3c8cf" stroke-width="1.5" stroke-dasharray="2 2"/>
<line x1="578.69" y1="258.50" x2="578.69" y2="542.50" stroke="#c3c8cf" stroke-width="1.5" stroke-dasharray="2 2"/>
<line x1="583.08" y1="258.50" x2="583.08" y2="542.50" stroke="#c3c8cf" stroke-width="1.5" stroke-dasharray="2 2"/>
<line x1="611.96" y1="258.50" x2="611.96" y2="542.50" stroke="#c3c8cf" stroke-width="1.5" stroke-dasharray="2 2"/>
<line x1="628.85" y1="258.50" x2="628.85" y2="542.50" stroke="#c3c8cf" stroke-width="1.5" stroke-dasharray="2 2"/>
<line x1="640.83" y1="258.50" x2="640.83" y2="542.50" stroke="#c3c8cf" stroke-width="1.5" stroke-dasharray="2 2"/>
<line x1="650.13" y1="258.50" x2="650.13" y2="542.50" stroke="#c3c8cf" stroke-width="1.5" stroke-dasharray="2 2"/>
<line x1="657.72" y1="258.50" x2="657.72" y2="542.50" stroke="#c3c8cf" stroke-width="1.5" stroke-dasharray="2 2"/>
<line x1="664.14" y1="258.50" x2="664.14" y2="542.50" stroke="#c3c8cf" stroke-width="1.5" stroke-dasharray="2 2"/>
<line x1="669.70" y1="258.50" x2="669.70" y2="542.50" stroke="#c3c8cf" stroke-width="1.5" stroke-dasharray="2 2"/>
<line x1="674.61" y1="258.50" x2="674.61" y2="542.50" stroke="#c3c8cf" stroke-width="1.5" stroke-dasharray="2 2"/>
<line x1="92.50" y1="395.50" x2="679.00" y2="395.50" stroke="#c3c8cf" stroke-width="1.5" stroke-dasharray="2 2"/>
<rect x="103.5" y="258.5" width="575.5" height="273.5" stroke="#b9c2cd" fill="none" stroke-width="1.8"/>
<text x="85.00" y="267.80" font-size="21.5" text-anchor="end">2</text>
<text x="85.00" y="403.80" font-size="21.5" text-anchor="end">1</text>
<text x="85.00" y="538.80" font-size="21.5" text-anchor="end">0</text>
<text x="103.00" y="565.50" font-size="21.5" text-anchor="middle">1</text>
<text x="198.92" y="565.50" font-size="21.5" text-anchor="middle" letter-spacing="-0.303">10</text>
<text x="294.83" y="565.50" font-size="21.5" text-anchor="middle" letter-spacing="-0.303">100</text>
<text x="390.75" y="565.50" font-size="21.5" text-anchor="middle" letter-spacing="-0.303">1000</text>
<text x="485.67" y="565.50" font-size="21.5" text-anchor="middle" letter-spacing="-0.303">10000</text>
<text x="581.58" y="565.50" font-size="21.5" text-anchor="middle" letter-spacing="-0.303">100000</text>
<text x="676.50" y="565.50" font-size="21.5" text-anchor="middle" letter-spacing="-0.303">1000000</text>
<text x="391.00" y="592.00" font-size="21.5" text-anchor="middle" letter-spacing="0.079">Time (µSec)</text>
<text x="64.50" y="392.50" font-size="21.5" text-anchor="middle" letter-spacing="-0.252" transform="rotate(-90 64.50 392.50)">G2(τ)</text>
<polyline points="103.5,355.5 117.5,358.0 132.5,359.8 150.0,357.0 160.0,357.0 170.0,359.2 180.0,357.5 190.0,358.8 200.0,358.5 207.5,356.8 215.0,358.5 225.0,359.0 250.0,359.2 275.0,360.0 300.0,360.5 312.5,362.0 325.0,364.0 337.5,366.2 350.0,369.0 362.5,371.8 375.0,375.0 387.5,378.5 400.0,382.0 412.5,385.5 425.0,388.8 440.0,392.5 452.5,394.0 465.0,395.8 500.0,395.8 677.5,395.5" fill="none" stroke="#2f66c4" stroke-width="3" stroke-linejoin="round" stroke-linecap="round" /><rect x="853.5" y="258.5" width="559.0" height="272.5" fill="#fff" fill-opacity="0.55"/>
<line x1="881.55" y1="258.50" x2="881.55" y2="541.50" stroke="#c3c8cf" stroke-width="1.5" stroke-dasharray="2 2"/>
<line x1="897.95" y1="258.50" x2="897.95" y2="541.50" stroke="#c3c8cf" stroke-width="1.5" stroke-dasharray="2 2"/>
<line x1="909.59" y1="258.50" x2="909.59" y2="541.50" stroke="#c3c8cf" stroke-width="1.5" stroke-dasharray="2 2"/>
<line x1="918.62" y1="258.50" x2="918.62" y2="541.50" stroke="#c3c8cf" stroke-width="1.5" stroke-dasharray="2 2"/>
<line x1="926.00" y1="258.50" x2="926.00" y2="541.50" stroke="#c3c8cf" stroke-width="1.5" stroke-dasharray="2 2"/>
<line x1="932.23" y1="258.50" x2="932.23" y2="541.50" stroke="#c3c8cf" stroke-width="1.5" stroke-dasharray="2 2"/>
<line x1="937.64" y1="258.50" x2="937.64" y2="541.50" stroke="#c3c8cf" stroke-width="1.5" stroke-dasharray="2 2"/>
<line x1="942.40" y1="258.50" x2="942.40" y2="541.50" stroke="#c3c8cf" stroke-width="1.5" stroke-dasharray="2 2"/>
<line x1="946.67" y1="258.50" x2="946.67" y2="541.50" stroke="#c3c8cf" stroke-width="1.5" stroke-dasharray="2 2"/>
<line x1="974.71" y1="258.50" x2="974.71" y2="541.50" stroke="#c3c8cf" stroke-width="1.5" stroke-dasharray="2 2"/>
<line x1="991.12" y1="258.50" x2="991.12" y2="541.50" stroke="#c3c8cf" stroke-width="1.5" stroke-dasharray="2 2"/>
<line x1="1002.76" y1="258.50" x2="1002.76" y2="541.50" stroke="#c3c8cf" stroke-width="1.5" stroke-dasharray="2 2"/>
<line x1="1011.79" y1="258.50" x2="1011.79" y2="541.50" stroke="#c3c8cf" stroke-width="1.5" stroke-dasharray="2 2"/>
<line x1="1019.16" y1="258.50" x2="1019.16" y2="541.50" stroke="#c3c8cf" stroke-width="1.5" stroke-dasharray="2 2"/>
<line x1="1025.40" y1="258.50" x2="1025.40" y2="541.50" stroke="#c3c8cf" stroke-width="1.5" stroke-dasharray="2 2"/>
<line x1="1030.80" y1="258.50" x2="1030.80" y2="541.50" stroke="#c3c8cf" stroke-width="1.5" stroke-dasharray="2 2"/>
<line x1="1035.57" y1="258.50" x2="1035.57" y2="541.50" stroke="#c3c8cf" stroke-width="1.5" stroke-dasharray="2 2"/>
<line x1="1039.83" y1="258.50" x2="1039.83" y2="541.50" stroke="#c3c8cf" stroke-width="1.5" stroke-dasharray="2 2"/>
<line x1="1067.88" y1="258.50" x2="1067.88" y2="541.50" stroke="#c3c8cf" stroke-width="1.5" stroke-dasharray="2 2"/>
<line x1="1084.29" y1="258.50" x2="1084.29" y2="541.50" stroke="#c3c8cf" stroke-width="1.5" stroke-dasharray="2 2"/>
<line x1="1095.93" y1="258.50" x2="1095.93" y2="541.50" stroke="#c3c8cf" stroke-width="1.5" stroke-dasharray="2 2"/>
<line x1="1104.95" y1="258.50" x2="1104.95" y2="541.50" stroke="#c3c8cf" stroke-width="1.5" stroke-dasharray="2 2"/>
<line x1="1112.33" y1="258.50" x2="1112.33" y2="541.50" stroke="#c3c8cf" stroke-width="1.5" stroke-dasharray="2 2"/>
<line x1="1118.57" y1="258.50" x2="1118.57" y2="541.50" stroke="#c3c8cf" stroke-width="1.5" stroke-dasharray="2 2"/>
<line x1="1123.97" y1="258.50" x2="1123.97" y2="541.50" stroke="#c3c8cf" stroke-width="1.5" stroke-dasharray="2 2"/>
<line x1="1128.74" y1="258.50" x2="1128.74" y2="541.50" stroke="#c3c8cf" stroke-width="1.5" stroke-dasharray="2 2"/>
<line x1="1133.00" y1="258.50" x2="1133.00" y2="541.50" stroke="#c3c8cf" stroke-width="1.5" stroke-dasharray="2 2"/>
<line x1="1161.05" y1="258.50" x2="1161.05" y2="541.50" stroke="#c3c8cf" stroke-width="1.5" stroke-dasharray="2 2"/>
<line x1="1177.45" y1="258.50" x2="1177.45" y2="541.50" stroke="#c3c8cf" stroke-width="1.5" stroke-dasharray="2 2"/>
<line x1="1189.09" y1="258.50" x2="1189.09" y2="541.50" stroke="#c3c8cf" stroke-width="1.5" stroke-dasharray="2 2"/>
<line x1="1198.12" y1="258.50" x2="1198.12" y2="541.50" stroke="#c3c8cf" stroke-width="1.5" stroke-dasharray="2 2"/>
<line x1="1205.50" y1="258.50" x2="1205.50" y2="541.50" stroke="#c3c8cf" stroke-width="1.5" stroke-dasharray="2 2"/>
<line x1="1211.73" y1="258.50" x2="1211.73" y2="541.50" stroke="#c3c8cf" stroke-width="1.5" stroke-dasharray="2 2"/>
<line x1="1217.14" y1="258.50" x2="1217.14" y2="541.50" stroke="#c3c8cf" stroke-width="1.5" stroke-dasharray="2 2"/>
<line x1="1221.90" y1="258.50" x2="1221.90" y2="541.50" stroke="#c3c8cf" stroke-width="1.5" stroke-dasharray="2 2"/>
<line x1="1226.17" y1="258.50" x2="1226.17" y2="541.50" stroke="#c3c8cf" stroke-width="1.5" stroke-dasharray="2 2"/>
<line x1="1254.21" y1="258.50" x2="1254.21" y2="541.50" stroke="#c3c8cf" stroke-width="1.5" stroke-dasharray="2 2"/>
<line x1="1270.62" y1="258.50" x2="1270.62" y2="541.50" stroke="#c3c8cf" stroke-width="1.5" stroke-dasharray="2 2"/>
<line x1="1282.26" y1="258.50" x2="1282.26" y2="541.50" stroke="#c3c8cf" stroke-width="1.5" stroke-dasharray="2 2"/>
<line x1="1291.29" y1="258.50" x2="1291.29" y2="541.50" stroke="#c3c8cf" stroke-width="1.5" stroke-dasharray="2 2"/>
<line x1="1298.66" y1="258.50" x2="1298.66" y2="541.50" stroke="#c3c8cf" stroke-width="1.5" stroke-dasharray="2 2"/>
<line x1="1304.90" y1="258.50" x2="1304.90" y2="541.50" stroke="#c3c8cf" stroke-width="1.5" stroke-dasharray="2 2"/>
<line x1="1310.30" y1="258.50" x2="1310.30" y2="541.50" stroke="#c3c8cf" stroke-width="1.5" stroke-dasharray="2 2"/>
<line x1="1315.07" y1="258.50" x2="1315.07" y2="541.50" stroke="#c3c8cf" stroke-width="1.5" stroke-dasharray="2 2"/>
<line x1="1319.33" y1="258.50" x2="1319.33" y2="541.50" stroke="#c3c8cf" stroke-width="1.5" stroke-dasharray="2 2"/>
<line x1="1347.38" y1="258.50" x2="1347.38" y2="541.50" stroke="#c3c8cf" stroke-width="1.5" stroke-dasharray="2 2"/>
<line x1="1363.79" y1="258.50" x2="1363.79" y2="541.50" stroke="#c3c8cf" stroke-width="1.5" stroke-dasharray="2 2"/>
<line x1="1375.43" y1="258.50" x2="1375.43" y2="541.50" stroke="#c3c8cf" stroke-width="1.5" stroke-dasharray="2 2"/>
<line x1="1384.45" y1="258.50" x2="1384.45" y2="541.50" stroke="#c3c8cf" stroke-width="1.5" stroke-dasharray="2 2"/>
<line x1="1391.83" y1="258.50" x2="1391.83" y2="541.50" stroke="#c3c8cf" stroke-width="1.5" stroke-dasharray="2 2"/>
<line x1="1398.07" y1="258.50" x2="1398.07" y2="541.50" stroke="#c3c8cf" stroke-width="1.5" stroke-dasharray="2 2"/>
<line x1="1403.47" y1="258.50" x2="1403.47" y2="541.50" stroke="#c3c8cf" stroke-width="1.5" stroke-dasharray="2 2"/>
<line x1="1408.24" y1="258.50" x2="1408.24" y2="541.50" stroke="#c3c8cf" stroke-width="1.5" stroke-dasharray="2 2"/>
<line x1="842.50" y1="288.00" x2="1412.50" y2="288.00" stroke="#c3c8cf" stroke-width="1.5" stroke-dasharray="2 2"/>
<line x1="842.50" y1="314.93" x2="1412.50" y2="314.93" stroke="#c3c8cf" stroke-width="1.5" stroke-dasharray="2 2"/>
<line x1="842.50" y1="341.86" x2="1412.50" y2="341.86" stroke="#c3c8cf" stroke-width="1.5" stroke-dasharray="2 2"/>
<line x1="842.50" y1="368.79" x2="1412.50" y2="368.79" stroke="#c3c8cf" stroke-width="1.5" stroke-dasharray="2 2"/>
<line x1="842.50" y1="395.72" x2="1412.50" y2="395.72" stroke="#c3c8cf" stroke-width="1.5" stroke-dasharray="2 2"/>
<line x1="842.50" y1="422.65" x2="1412.50" y2="422.65" stroke="#c3c8cf" stroke-width="1.5" stroke-dasharray="2 2"/>
<line x1="842.50" y1="449.58" x2="1412.50" y2="449.58" stroke="#c3c8cf" stroke-width="1.5" stroke-dasharray="2 2"/>
<line x1="842.50" y1="476.51" x2="1412.50" y2="476.51" stroke="#c3c8cf" stroke-width="1.5" stroke-dasharray="2 2"/>
<line x1="842.50" y1="503.44" x2="1412.50" y2="503.44" stroke="#c3c8cf" stroke-width="1.5" stroke-dasharray="2 2"/>
<rect x="853.5" y="258.5" width="559.0" height="272.5" stroke="#b9c2cd" fill="none" stroke-width="1.8"/>
<text x="835.50" y="268.37" font-size="21.5" text-anchor="end">0</text>
<text x="835.50" y="295.80" font-size="21.5" text-anchor="end" letter-spacing="-0.318">-1</text>
<text x="835.50" y="322.73" font-size="21.5" text-anchor="end" letter-spacing="-0.318">-2</text>
<text x="835.50" y="349.66" font-size="21.5" text-anchor="end" letter-spacing="-0.318">-3</text>
<text x="835.50" y="376.59" font-size="21.5" text-anchor="end" letter-spacing="-0.318">-4</text>
<text x="835.50" y="403.52" font-size="21.5" text-anchor="end" letter-spacing="-0.318">-5</text>
<text x="835.50" y="430.45" font-size="21.5" text-anchor="end" letter-spacing="-0.318">-6</text>
<text x="835.50" y="457.38" font-size="21.5" text-anchor="end" letter-spacing="-0.318">-7</text>
<text x="835.50" y="484.31" font-size="21.5" text-anchor="end" letter-spacing="-0.318">-8</text>
<text x="835.50" y="511.24" font-size="21.5" text-anchor="end" letter-spacing="-0.318">-9</text>
<text x="835.50" y="538.17" font-size="21.5" text-anchor="end" letter-spacing="-0.348">-10</text>
<text x="853.00" y="565.50" font-size="21.5" text-anchor="middle">1</text>
<text x="946.17" y="565.50" font-size="21.5" text-anchor="middle" letter-spacing="-0.303">10</text>
<text x="1039.33" y="565.50" font-size="21.5" text-anchor="middle" letter-spacing="-0.303">100</text>
<text x="1132.50" y="565.50" font-size="21.5" text-anchor="middle" letter-spacing="-0.303">1000</text>
<text x="1224.67" y="565.50" font-size="21.5" text-anchor="middle" letter-spacing="-0.303">10000</text>
<text x="1317.83" y="565.50" font-size="21.5" text-anchor="middle" letter-spacing="-0.303">100000</text>
<text x="1410.00" y="565.50" font-size="21.5" text-anchor="middle" letter-spacing="-0.303">1000000</text>
<text x="1132.50" y="592.00" font-size="21.5" text-anchor="middle" letter-spacing="0.079">Time (µSec)</text>
<text x="796.50" y="392.50" font-size="21.5" text-anchor="middle" letter-spacing="-0.236" transform="rotate(-90 796.50 392.50)">Ln(G2(τ)-1)</text>
<clipPath id="c2clip"><rect x="853.5" y="258.5" width="560.0" height="272.5"/></clipPath>
<polyline points="853.5,293.5 880.0,295.0 915.0,295.2 950.0,295.5 985.0,295.5 995.0,296.8 1010.0,296.2 1040.0,297.2 1060.0,298.5 1075.0,300.2 1090.0,302.8 1100.0,305.0 1112.5,308.5 1125.0,312.8 1137.5,318.2 1150.0,325.0 1157.5,330.0 1165.0,336.0 1172.5,343.5 1180.0,352.5 1187.5,363.5 1195.0,376.5 1200.0,385.0 1205.0,396.0 1204.6,397.7 1207.6,409.9 1209.6,420.7 1211.5,430.2 1213.0,424.5 1215.3,427.6 1217.1,430.2 1217.9,440.6 1219.9,449.8 1222.2,463.3 1224.5,434.5 1226.5,441.4 1228.3,435.7 1230.3,439.4 1231.4,459.8 1232.9,450.1 1235.1,449.5 1236.3,459.8 1235.6,494.3 1237.9,574.0 1238.8,574.0 1240.0,452.6 1242.1,456.3 1243.7,466.7 1244.6,503.5 1247.1,574.0 1248.0,574.0 1249.8,466.7 1252.9,448.3 1256.0,435.2 1258.4,447.1 1259.3,477.1 1261.2,447.5 1262.4,473.6 1262.4,574.0 1274.0,574.0 1274.7,494.3 1276.7,468.5 1278.5,497.4 1280.8,513.5 1279.9,574.0 1276.7,574.0 1277.4,518.8 1278.2,574.0 1287.2,574.0 1287.9,469.8 1289.1,469.8 1289.7,574.0 1289.4,574.0 1290.0,470.1 1291.2,470.1 1291.8,574.0 1292.5,574.0 1293.1,443.7 1294.3,443.7 1294.9,574.0 1305.3,574.0 1306.0,432.9 1307.2,432.9 1307.8,574.0 1307.2,574.0 1307.8,454.4 1309.0,454.4 1309.6,574.0 1311.5,574.0 1312.1,445.2 1313.3,445.2 1313.9,574.0 1314.8,574.0 1315.5,474.4 1316.7,474.4 1317.3,574.0 1320.1,574.0 1320.7,457.5 1321.9,457.5 1322.5,574.0 1321.9,574.0 1322.5,497.4 1323.7,497.4 1324.4,574.0 1329.1,574.0 1329.7,448.3 1331.0,448.3 1331.6,574.0 1336.3,574.0 1336.9,465.9 1338.2,465.9 1338.8,574.0 1338.3,574.0 1338.9,469.8 1340.2,469.8 1340.8,574.0 1341.5,574.0 1342.1,492.0 1343.4,492.0 1344.0,574.0 1346.7,574.0 1347.4,453.7 1348.6,453.7 1349.2,574.0 1352.9,574.0 1353.5,482.0 1354.7,482.0 1355.3,574.0 1359.9,574.0 1360.6,469.8 1361.8,469.8 1362.4,574.0 1362.1,574.0 1362.7,475.9 1363.9,475.9 1364.5,574.0 1364.5,574.0 1365.2,465.2 1366.4,465.2 1367.0,574.0 1367.5,574.0 1368.1,448.3 1369.3,448.3 1369.9,574.0 1375.9,574.0 1376.5,452.1 1377.7,452.1 1378.3,574.0 1380.8,574.0 1381.4,478.2 1382.6,478.2 1383.3,574.0 1391.8,574.0 1392.8,471.3 1394.3,471.3 1395.2,506.6 1397.4,508.4 1400.7,509.3 1402.0,574.0 1403.5,574.0 1404.1,461.3 1405.3,461.3 1406.0,574.0 1407.5,574.0 1408.4,450.1 1410.2,450.1 1411.2,466.7 1411.8,485.4" fill="none" stroke="#2f66c4" stroke-width="3" stroke-linejoin="round" stroke-linecap="round" clip-path="url(#c2clip)"/><rect x="128" y="733.5" width="551" height="319.0" fill="#fff" fill-opacity="0.55"/>
<line x1="199.00" y1="733.50" x2="199.00" y2="1063.50" stroke="#c3c8cf" stroke-width="1.5" stroke-dasharray="2 2"/>
<line x1="278.70" y1="733.50" x2="278.70" y2="1063.50" stroke="#c3c8cf" stroke-width="1.5" stroke-dasharray="2 2"/>
<line x1="358.40" y1="733.50" x2="358.40" y2="1063.50" stroke="#c3c8cf" stroke-width="1.5" stroke-dasharray="2 2"/>
<line x1="438.10" y1="733.50" x2="438.10" y2="1063.50" stroke="#c3c8cf" stroke-width="1.5" stroke-dasharray="2 2"/>
<line x1="517.80" y1="733.50" x2="517.80" y2="1063.50" stroke="#c3c8cf" stroke-width="1.5" stroke-dasharray="2 2"/>
<line x1="597.50" y1="733.50" x2="597.50" y2="1063.50" stroke="#c3c8cf" stroke-width="1.5" stroke-dasharray="2 2"/>
<line x1="117.00" y1="982.14" x2="679.00" y2="982.14" stroke="#c3c8cf" stroke-width="1.5" stroke-dasharray="2 2"/>
<line x1="117.00" y1="911.28" x2="679.00" y2="911.28" stroke="#c3c8cf" stroke-width="1.5" stroke-dasharray="2 2"/>
<line x1="117.00" y1="840.42" x2="679.00" y2="840.42" stroke="#c3c8cf" stroke-width="1.5" stroke-dasharray="2 2"/>
<line x1="117.00" y1="769.56" x2="679.00" y2="769.56" stroke="#c3c8cf" stroke-width="1.5" stroke-dasharray="2 2"/>
<line x1="122.00" y1="1017.57" x2="128.00" y2="1017.57" stroke="#b9c2cd" stroke-width="1.6"/>
<line x1="122.00" y1="946.71" x2="128.00" y2="946.71" stroke="#b9c2cd" stroke-width="1.6"/>
<line x1="122.00" y1="875.85" x2="128.00" y2="875.85" stroke="#b9c2cd" stroke-width="1.6"/>
<line x1="122.00" y1="804.99" x2="128.00" y2="804.99" stroke="#b9c2cd" stroke-width="1.6"/>
<line x1="135.24" y1="1052.50" x2="135.24" y2="1058.50" stroke="#b9c2cd" stroke-width="1.6"/>
<line x1="151.18" y1="1052.50" x2="151.18" y2="1058.50" stroke="#b9c2cd" stroke-width="1.6"/>
<line x1="167.12" y1="1052.50" x2="167.12" y2="1058.50" stroke="#b9c2cd" stroke-width="1.6"/>
<line x1="183.06" y1="1052.50" x2="183.06" y2="1058.50" stroke="#b9c2cd" stroke-width="1.6"/>
<line x1="214.94" y1="1052.50" x2="214.94" y2="1058.50" stroke="#b9c2cd" stroke-width="1.6"/>
<line x1="230.88" y1="1052.50" x2="230.88" y2="1058.50" stroke="#b9c2cd" stroke-width="1.6"/>
<line x1="246.82" y1="1052.50" x2="246.82" y2="1058.50" stroke="#b9c2cd" stroke-width="1.6"/>
<line x1="262.76" y1="1052.50" x2="262.76" y2="1058.50" stroke="#b9c2cd" stroke-width="1.6"/>
<line x1="294.64" y1="1052.50" x2="294.64" y2="1058.50" stroke="#b9c2cd" stroke-width="1.6"/>
<line x1="310.58" y1="1052.50" x2="310.58" y2="1058.50" stroke="#b9c2cd" stroke-width="1.6"/>
<line x1="326.52" y1="1052.50" x2="326.52" y2="1058.50" stroke="#b9c2cd" stroke-width="1.6"/>
<line x1="342.46" y1="1052.50" x2="342.46" y2="1058.50" stroke="#b9c2cd" stroke-width="1.6"/>
<line x1="374.34" y1="1052.50" x2="374.34" y2="1058.50" stroke="#b9c2cd" stroke-width="1.6"/>
<line x1="390.28" y1="1052.50" x2="390.28" y2="1058.50" stroke="#b9c2cd" stroke-width="1.6"/>
<line x1="406.22" y1="1052.50" x2="406.22" y2="1058.50" stroke="#b9c2cd" stroke-width="1.6"/>
<line x1="422.16" y1="1052.50" x2="422.16" y2="1058.50" stroke="#b9c2cd" stroke-width="1.6"/>
<line x1="454.04" y1="1052.50" x2="454.04" y2="1058.50" stroke="#b9c2cd" stroke-width="1.6"/>
<line x1="469.98" y1="1052.50" x2="469.98" y2="1058.50" stroke="#b9c2cd" stroke-width="1.6"/>
<line x1="485.92" y1="1052.50" x2="485.92" y2="1058.50" stroke="#b9c2cd" stroke-width="1.6"/>
<line x1="501.86" y1="1052.50" x2="501.86" y2="1058.50" stroke="#b9c2cd" stroke-width="1.6"/>
<line x1="533.74" y1="1052.50" x2="533.74" y2="1058.50" stroke="#b9c2cd" stroke-width="1.6"/>
<line x1="549.68" y1="1052.50" x2="549.68" y2="1058.50" stroke="#b9c2cd" stroke-width="1.6"/>
<line x1="565.62" y1="1052.50" x2="565.62" y2="1058.50" stroke="#b9c2cd" stroke-width="1.6"/>
<line x1="581.56" y1="1052.50" x2="581.56" y2="1058.50" stroke="#b9c2cd" stroke-width="1.6"/>
<line x1="613.44" y1="1052.50" x2="613.44" y2="1058.50" stroke="#b9c2cd" stroke-width="1.6"/>
<line x1="629.38" y1="1052.50" x2="629.38" y2="1058.50" stroke="#b9c2cd" stroke-width="1.6"/>
<line x1="645.32" y1="1052.50" x2="645.32" y2="1058.50" stroke="#b9c2cd" stroke-width="1.6"/>
<line x1="661.26" y1="1052.50" x2="661.26" y2="1058.50" stroke="#b9c2cd" stroke-width="1.6"/>
<rect x="128" y="733.5" width="551" height="319.0" stroke="#b9c2cd" fill="none" stroke-width="1.8"/>
<text x="109.50" y="1059.30" font-size="21.5" text-anchor="end">0</text>
<text x="109.50" y="988.44" font-size="21.5" text-anchor="end" letter-spacing="-0.303">200</text>
<text x="109.50" y="917.58" font-size="21.5" text-anchor="end" letter-spacing="-0.303">400</text>
<text x="109.50" y="846.72" font-size="21.5" text-anchor="end" letter-spacing="-0.303">600</text>
<text x="109.50" y="775.86" font-size="21.5" text-anchor="end" letter-spacing="-0.303">800</text>
<text x="198.50" y="1086.00" font-size="21.5" text-anchor="middle" letter-spacing="-0.303">10</text>
<text x="278.20" y="1086.00" font-size="21.5" text-anchor="middle" letter-spacing="-0.303">20</text>
<text x="357.90" y="1086.00" font-size="21.5" text-anchor="middle" letter-spacing="-0.303">30</text>
<text x="437.60" y="1086.00" font-size="21.5" text-anchor="middle" letter-spacing="-0.303">40</text>
<text x="517.30" y="1086.00" font-size="21.5" text-anchor="middle" letter-spacing="-0.303">50</text>
<text x="597.00" y="1086.00" font-size="21.5" text-anchor="middle" letter-spacing="-0.303">60</text>
<text x="676.70" y="1086.00" font-size="21.5" text-anchor="middle" letter-spacing="-0.303">70</text>
<text x="401.50" y="1113.50" font-size="21.5" text-anchor="middle" letter-spacing="-0.252">Accumulation Times</text>
<text x="66.50" y="891.00" font-size="21.5" text-anchor="middle" letter-spacing="-0.255" transform="rotate(-90 66.50 891.00)">Diameter (nm)</text>
<polyline points="126.6,822.4 136.0,824.0 142.4,848.6 151.4,857.6 158.4,813.6 167.0,829.6 174.4,831.0 182.6,841.6 191.6,845.0 198.4,810.4 206.6,826.0 214.0,828.0 222.6,805.0 231.0,834.6 238.0,838.4 247.0,828.0 254.0,800.0 262.4,810.6 269.6,784.4 278.0,807.0 287.0,824.4 294.0,803.0 302.6,810.4 309.4,831.4 318.0,801.6 325.4,801.6 333.4,814.0 342.6,813.6 350.0,824.0 358.4,843.6 365.0,765.0 373.6,784.4 382.6,775.4 389.4,842.0 398.0,815.6 405.0,833.0 414.0,838.4 420.0,808.6 429.4,802.6 438.0,808.6 445.4,810.0 453.6,847.0 460.6,805.0 469.4,816.0 477.4,808.6 485.0,808.6 493.4,824.4 500.6,800.0 509.4,845.6 516.4,813.6 525.0,836.6 533.6,791.0 540.4,844.0 549.4,762.0 556.0,840.0 564.4,802.0 572.0,801.6 580.4,814.0 589.4,765.0 596.0,802.0 605.0,847.0 611.6,833.0 620.4,836.6 629.0,803.6 636.4,811.0 644.6,822.6 652.0,871.4 660.4,843.6 667.6,828.0 676.4,791.4" fill="none" stroke="#2a66c6" stroke-width="3.2" stroke-linejoin="round" stroke-linecap="round" />
<circle cx="126.6" cy="822.4" r="6.6" fill="url(#ball)"/>
<circle cx="136.0" cy="824.0" r="6.6" fill="url(#ball)"/>
<circle cx="142.4" cy="848.6" r="6.6" fill="url(#ball)"/>
<circle cx="151.4" cy="857.6" r="6.6" fill="url(#ball)"/>
<circle cx="158.4" cy="813.6" r="6.6" fill="url(#ball)"/>
<circle cx="167.0" cy="829.6" r="6.6" fill="url(#ball)"/>
<circle cx="174.4" cy="831.0" r="6.6" fill="url(#ball)"/>
<circle cx="182.6" cy="841.6" r="6.6" fill="url(#ball)"/>
<circle cx="191.6" cy="845.0" r="6.6" fill="url(#ball)"/>
<circle cx="198.4" cy="810.4" r="6.6" fill="url(#ball)"/>
<circle cx="206.6" cy="826.0" r="6.6" fill="url(#ball)"/>
<circle cx="214.0" cy="828.0" r="6.6" fill="url(#ball)"/>
<circle cx="222.6" cy="805.0" r="6.6" fill="url(#ball)"/>
<circle cx="231.0" cy="834.6" r="6.6" fill="url(#ball)"/>
<circle cx="238.0" cy="838.4" r="6.6" fill="url(#ball)"/>
<circle cx="247.0" cy="828.0" r="6.6" fill="url(#ball)"/>
<circle cx="254.0" cy="800.0" r="6.6" fill="url(#ball)"/>
<circle cx="262.4" cy="810.6" r="6.6" fill="url(#ball)"/>
<circle cx="269.6" cy="784.4" r="6.6" fill="url(#ball)"/>
<circle cx="278.0" cy="807.0" r="6.6" fill="url(#ball)"/>
<circle cx="287.0" cy="824.4" r="6.6" fill="url(#ball)"/>
<circle cx="294.0" cy="803.0" r="6.6" fill="url(#ball)"/>
<circle cx="302.6" cy="810.4" r="6.6" fill="url(#ball)"/>
<circle cx="309.4" cy="831.4" r="6.6" fill="url(#ball)"/>
<circle cx="318.0" cy="801.6" r="6.6" fill="url(#ball)"/>
<circle cx="325.4" cy="801.6" r="6.6" fill="url(#ball)"/>
<circle cx="333.4" cy="814.0" r="6.6" fill="url(#ball)"/>
<circle cx="342.6" cy="813.6" r="6.6" fill="url(#ball)"/>
<circle cx="350.0" cy="824.0" r="6.6" fill="url(#ball)"/>
<circle cx="358.4" cy="843.6" r="6.6" fill="url(#ball)"/>
<circle cx="365.0" cy="765.0" r="6.6" fill="url(#ball)"/>
<circle cx="373.6" cy="784.4" r="6.6" fill="url(#ball)"/>
<circle cx="382.6" cy="775.4" r="6.6" fill="url(#ball)"/>
<circle cx="389.4" cy="842.0" r="6.6" fill="url(#ball)"/>
<circle cx="398.0" cy="815.6" r="6.6" fill="url(#ball)"/>
<circle cx="405.0" cy="833.0" r="6.6" fill="url(#ball)"/>
<circle cx="414.0" cy="838.4" r="6.6" fill="url(#ball)"/>
<circle cx="420.0" cy="808.6" r="6.6" fill="url(#ball)"/>
<circle cx="429.4" cy="802.6" r="6.6" fill="url(#ball)"/>
<circle cx="438.0" cy="808.6" r="6.6" fill="url(#ball)"/>
<circle cx="445.4" cy="810.0" r="6.6" fill="url(#ball)"/>
<circle cx="453.6" cy="847.0" r="6.6" fill="url(#ball)"/>
<circle cx="460.6" cy="805.0" r="6.6" fill="url(#ball)"/>
<circle cx="469.4" cy="816.0" r="6.6" fill="url(#ball)"/>
<circle cx="477.4" cy="808.6" r="6.6" fill="url(#ball)"/>
<circle cx="485.0" cy="808.6" r="6.6" fill="url(#ball)"/>
<circle cx="493.4" cy="824.4" r="6.6" fill="url(#ball)"/>
<circle cx="500.6" cy="800.0" r="6.6" fill="url(#ball)"/>
<circle cx="509.4" cy="845.6" r="6.6" fill="url(#ball)"/>
<circle cx="516.4" cy="813.6" r="6.6" fill="url(#ball)"/>
<circle cx="525.0" cy="836.6" r="6.6" fill="url(#ball)"/>
<circle cx="533.6" cy="791.0" r="6.6" fill="url(#ball)"/>
<circle cx="540.4" cy="844.0" r="6.6" fill="url(#ball)"/>
<circle cx="549.4" cy="762.0" r="6.6" fill="url(#ball)"/>
<circle cx="556.0" cy="840.0" r="6.6" fill="url(#ball)"/>
<circle cx="564.4" cy="802.0" r="6.6" fill="url(#ball)"/>
<circle cx="572.0" cy="801.6" r="6.6" fill="url(#ball)"/>
<circle cx="580.4" cy="814.0" r="6.6" fill="url(#ball)"/>
<circle cx="589.4" cy="765.0" r="6.6" fill="url(#ball)"/>
<circle cx="596.0" cy="802.0" r="6.6" fill="url(#ball)"/>
<circle cx="605.0" cy="847.0" r="6.6" fill="url(#ball)"/>
<circle cx="611.6" cy="833.0" r="6.6" fill="url(#ball)"/>
<circle cx="620.4" cy="836.6" r="6.6" fill="url(#ball)"/>
<circle cx="629.0" cy="803.6" r="6.6" fill="url(#ball)"/>
<circle cx="636.4" cy="811.0" r="6.6" fill="url(#ball)"/>
<circle cx="644.6" cy="822.6" r="6.6" fill="url(#ball)"/>
<circle cx="652.0" cy="871.4" r="6.6" fill="url(#ball)"/>
<circle cx="660.4" cy="843.6" r="6.6" fill="url(#ball)"/>
<circle cx="667.6" cy="828.0" r="6.6" fill="url(#ball)"/>
<circle cx="676.4" cy="791.4" r="6.6" fill="url(#ball)"/><rect x="835" y="781" width="282.5" height="271.5" fill="#fff" fill-opacity="0.55"/>
<line x1="928.75" y1="781.00" x2="928.75" y2="1062.50" stroke="#b8bcc2" stroke-width="1.5" stroke-dasharray="2 2"/>
<line x1="1019.00" y1="781.00" x2="1019.00" y2="1062.50" stroke="#b8bcc2" stroke-width="1.5" stroke-dasharray="2 2"/>
<line x1="1109.00" y1="781.00" x2="1109.00" y2="1062.50" stroke="#b8bcc2" stroke-width="1.5" stroke-dasharray="2 2"/>
<line x1="835.00" y1="985.50" x2="1128.50" y2="985.50" stroke="#2424ff" stroke-width="1.7" stroke-dasharray="2 2"/>
<line x1="835.00" y1="918.50" x2="1128.50" y2="918.50" stroke="#2424ff" stroke-width="1.7" stroke-dasharray="2 2"/>
<line x1="835.00" y1="851.50" x2="1128.50" y2="851.50" stroke="#2424ff" stroke-width="1.7" stroke-dasharray="2 2"/>
<polyline points="835.0,1052.5 957.5,1052.5 959.5,1051.9 962.8,1050.1 966.8,1047.0 968.8,1044.8 971.8,1040.6 973.8,1037.1 976.8,1030.8 980.7,1020.8 982.1,1016.8 986.1,1004.1 987.7,998.5 991.3,984.9 994.6,971.3 996.6,962.8 1000.6,945.4 1003.6,932.0 1007.6,914.1 1010.5,900.8 1012.5,892.3 1015.9,878.2 1019.5,864.0 1021.5,856.5 1025.4,842.4 1028.4,832.6 1030.4,826.6 1033.4,818.6 1035.4,813.9 1038.7,806.7 1042.3,800.2 1044.3,797.1 1047.7,792.8 1051.3,789.1 1053.3,787.4 1056.2,785.4 1058.2,784.4 1061.6,783.3 1115.5,783.3" fill="none" stroke="#e8264a" stroke-width="1.7" stroke-linejoin="round" stroke-linecap="round" />
<path d="M957.5,1052.5 L957.5,1035.3 L959.5,1035.3 L959.5,1022.4 L962.8,1022.4 L962.8,1008.5 L966.8,1008.5 L966.8,990.6 L968.8,990.6 L968.8,973.7 L971.8,973.7 L971.8,952.9 L973.8,952.9 L973.8,932.0 L976.8,932.0 L976.8,911.1 L980.7,911.1 L980.7,891.3 L982.1,891.3 L982.1,871.4 L986.1,871.4 L986.1,853.5 L987.7,853.5 L987.7,838.6 L991.3,838.6 L991.3,824.7 L994.6,824.7 L994.6,813.8 L996.6,813.8 L996.6,804.8 L1000.6,804.8 L1000.6,799.9 L1003.6,799.9 L1003.6,798.3 L1007.6,798.3 L1007.6,800.9 L1010.5,800.9 L1010.5,809.8 L1012.5,809.8 L1012.5,817.8 L1015.9,817.8 L1015.9,827.7 L1019.5,827.7 L1019.5,841.6 L1021.5,841.6 L1021.5,851.5 L1025.4,851.5 L1025.4,867.4 L1028.4,867.4 L1028.4,883.3 L1030.4,883.3 L1030.4,901.2 L1033.4,901.2 L1033.4,917.1 L1035.4,917.1 L1035.4,933.0 L1038.7,933.0 L1038.7,949.9 L1042.3,949.9 L1042.3,965.8 L1044.3,965.8 L1044.3,979.7 L1047.7,979.7 L1047.7,993.6 L1051.3,993.6 L1051.3,1004.5 L1053.3,1004.5 L1053.3,1015.4 L1056.2,1015.4 L1056.2,1025.4 L1058.2,1025.4 L1058.2,1033.3 L1061.6,1033.3 L1061.6,1052.5 Z" fill="#324fa8"/>
<rect x="835" y="781" width="282.5" height="271.5" stroke="#b9c2cd" fill="none" stroke-width="1.8"/>
<line x1="1061.60" y1="1052.50" x2="1117.50" y2="1052.50" stroke="#6d8fe0" stroke-width="1.6"/>
<line x1="835.00" y1="1052.50" x2="957.48" y2="1052.50" stroke="#8a5cb8" stroke-width="1.6"/>
<text x="816.50" y="791.50" font-size="21.5" text-anchor="end">5</text>
<text x="816.50" y="1061.50" font-size="21.5" text-anchor="end">0</text>
<text x="1174.00" y="792.50" font-size="21.5" text-anchor="end" fill="#1414ff" letter-spacing="-0.286">100</text>
<text x="1174.00" y="860.00" font-size="21.5" text-anchor="end" fill="#1414ff" letter-spacing="-0.286">75</text>
<text x="1174.00" y="926.00" font-size="21.5" text-anchor="end" fill="#1414ff" letter-spacing="-0.286">50</text>
<text x="1174.00" y="994.00" font-size="21.5" text-anchor="end" fill="#1414ff" letter-spacing="-0.286">25</text>
<text x="1172.50" y="1061.50" font-size="21.5" text-anchor="end" fill="#1414ff">0</text>
<text x="836.00" y="1086.00" font-size="21.5" text-anchor="middle" letter-spacing="-0.250">10.0</text>
<text x="929.00" y="1086.00" font-size="21.5" text-anchor="middle" letter-spacing="-0.257">100.0</text>
<text x="1018.50" y="1086.00" font-size="21.5" text-anchor="middle" letter-spacing="-0.262">1000.0</text>
<text x="1108.00" y="1086.00" font-size="21.5" text-anchor="middle" letter-spacing="-0.265">10000.0</text>
<text x="973.50" y="1113.50" font-size="21.5" text-anchor="middle" letter-spacing="-0.255">Diameter (nm)</text>
<text x="798.00" y="915.00" font-size="21.5" text-anchor="middle" letter-spacing="-0.212" transform="rotate(-90 798.00 915.00)">Differential Intensity (%)</text>
<text x="1201.50" y="915.00" font-size="21.5" text-anchor="middle" letter-spacing="-0.237" transform="rotate(-90 1201.50 915.00)">Cumulative Intensity(%)</text></svg>
<div style="position:absolute;left:13.5px;top:1160px;width:1469.5px;height:36px;background:linear-gradient(180deg,#d6e6fb 0,#ccdef8 50%,#9fbdea 100%);"></div>
<div style="position:absolute;left:13.5px;top:1195.8px;width:1469.5px;height:3.7000000000000455px;background:#002d96;"></div>
<div class="t" style="left:21.50px;top:1166.16px;font-size:21.5px;line-height:25.8px;letter-spacing:-0.536px;">Results</div>
<svg style="position:absolute;left:1450px;top:1164px" width="28" height="28" viewBox="0 0 28 28"><defs><radialGradient id="pg" cx="0.35" cy="0.35" r="0.7"><stop offset="0" stop-color="#ffffff"/><stop offset="0.55" stop-color="#d4d4d4"/><stop offset="1" stop-color="#7c7c7c"/></radialGradient></defs><path d="M3 24 L8 19" stroke="#70757c" stroke-width="1.7"/><circle cx="11.5" cy="14.5" r="6" fill="url(#pg)"/><circle cx="15" cy="12" r="3.2" fill="#8a8a8a"/><circle cx="18" cy="8.5" r="4.3" fill="url(#pg)"/></svg>
<div style="position:absolute;left:25px;top:1210px;width:1446.5px;height:167px;background:#f4f7fd;"></div>
<div style="position:absolute;left:26px;top:1211px;width:1443.8px;height:164.5px;box-sizing:border-box;border:2.2px solid #161616;background:linear-gradient(180deg,#d6e6fb 0,#c6daf6 50%,#b4ccf0 100%);"></div>
<svg style="position:absolute;left:0;top:0" width="1500" height="1409" viewBox="0 0 1500 1409"><path d="M29.5 1232 Q29.5 1224.5 36 1224.5 L43 1224.5 M280 1224.5 L669 1224.5 Q675 1224.5 675 1231 L675 1366 Q675 1370 671 1372.5" stroke="#5e86d6" stroke-width="2.2" fill="none"/><path d="M677.2 1366 L677.2 1231 Q677.2 1224.5 684 1224.5 L690 1224.5 M875 1224.5 L1460 1224.5 Q1466 1224.5 1466 1231 L1466 1366 Q1466 1370 1462 1372.5 M677.2 1366 Q677.2 1370 681 1372.5" stroke="#5e86d6" stroke-width="2.2" fill="none"/><path d="M29.5 1366 Q29.5 1370 33 1372.5" stroke="#5e86d6" stroke-width="2.2" fill="none"/></svg>
<div class="t" style="left:46.50px;top:1212.16px;font-size:21.5px;line-height:25.8px;letter-spacing:-0.343px;">Measurement Condition</div>
<div class="t" style="left:694.00px;top:1212.16px;font-size:21.5px;line-height:25.8px;letter-spacing:-0.525px;">Cumulants Results</div>
<div class="t" style="left:51.50px;top:1266.66px;font-size:21.5px;line-height:25.8px;letter-spacing:0.239px;">Temperature (°C) :</div>
<div class="t" style="left:245.00px;top:1266.66px;font-size:21.5px;line-height:25.8px;font-weight:bold;letter-spacing:0.070px;">25.1</div>
<div class="t" style="left:51.50px;top:1300.16px;font-size:21.5px;line-height:25.8px;letter-spacing:0.039px;">Intensity (cps)</div>
<div class="t" style="left:245.00px;top:1300.16px;font-size:21.5px;line-height:25.8px;font-weight:bold;letter-spacing:0.342px;">27761</div>
<div class="t" style="left:372.00px;top:1268.66px;font-size:21.5px;line-height:25.8px;letter-spacing:-0.147px;">Viscosity (cP) :</div>
<div class="t" style="left:555.50px;top:1268.66px;font-size:21.5px;line-height:25.8px;font-weight:bold;letter-spacing:0.227px;">0.8858</div>
<div class="t" style="left:371.00px;top:1301.66px;font-size:21.5px;line-height:25.8px;letter-spacing:-0.135px;">Refractive Index :</div>
<div class="t" style="left:556.50px;top:1301.66px;font-size:21.5px;line-height:25.8px;font-weight:bold;letter-spacing:0.060px;">1.3328</div>
<div class="t" style="left:724.00px;top:1247.66px;font-size:21.5px;line-height:25.8px;letter-spacing:-0.254px;">Diameter (nm) :</div>
<div class="t" style="left:1064.50px;top:1249.66px;font-size:21.5px;line-height:25.8px;font-weight:bold;letter-spacing:0.164px;">671.4</div>
<div class="t" style="left:724.00px;top:1280.16px;font-size:21.5px;line-height:25.8px;letter-spacing:-0.394px;">Polydispersity Index:</div>
<div class="t" style="left:1064.50px;top:1282.16px;font-size:21.5px;line-height:25.8px;font-weight:bold;letter-spacing:0.164px;">0.242</div>
</body></html>
